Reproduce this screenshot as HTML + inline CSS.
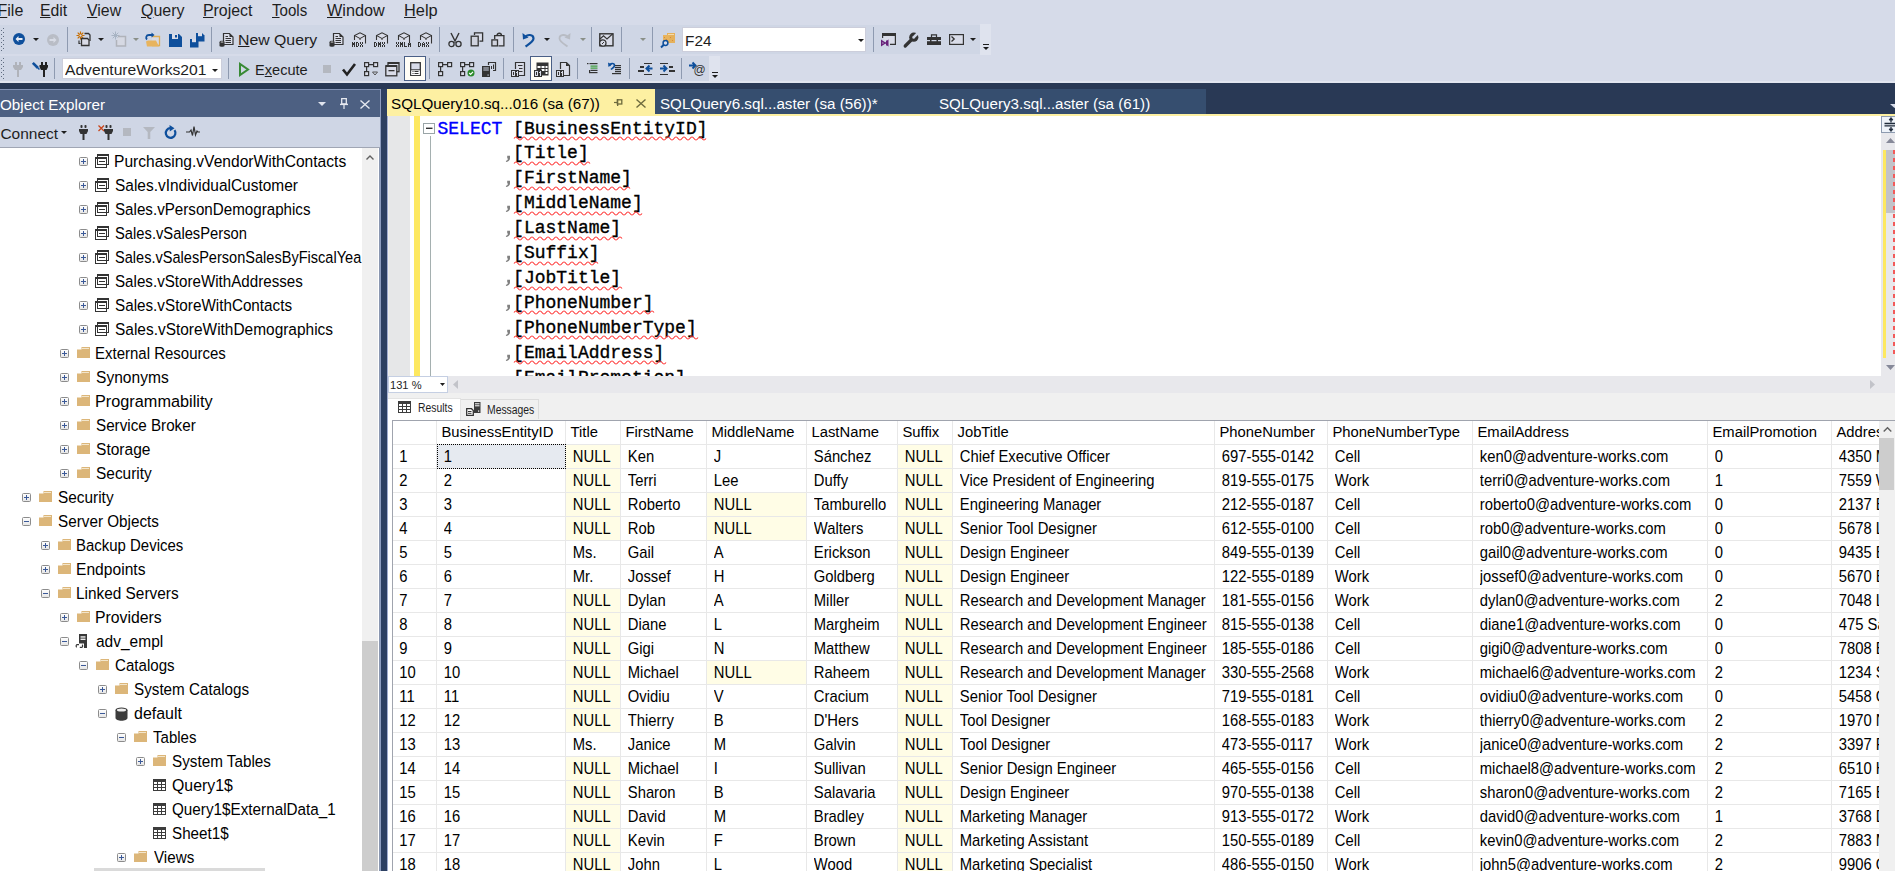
<!DOCTYPE html><html><head><meta charset="utf-8"><style>
html,body{margin:0;padding:0;width:1895px;height:871px;overflow:hidden;background:#d6dbe9;position:relative}
div{box-sizing:border-box}
.t{position:absolute;white-space:pre;font-family:"Liberation Sans",sans-serif;line-height:1;}
.m{position:absolute;white-space:pre;font-family:"Liberation Mono",monospace;line-height:1;}
svg{position:absolute;overflow:visible}
</style></head><body>
<div style="position:absolute;left:0px;top:0px;width:1895px;height:25px;background:#d6dbe9;"></div>
<div class="t" style="left:-2.5px;top:3px;font-size:16px;color:#1e1e1e;"><u>F</u>ile</div>
<div class="t" style="left:39.91px;top:3px;font-size:16px;color:#1e1e1e;transform:scale(0.9885,1.0);transform-origin:0 13px;"><u>E</u>dit</div>
<div class="t" style="left:86.90px;top:3px;font-size:16px;color:#1e1e1e;transform:scale(0.9913,1.0);transform-origin:0 13px;"><u>V</u>iew</div>
<div class="t" style="left:140.60px;top:3px;font-size:16px;color:#1e1e1e;transform:scale(0.9977,1.0);transform-origin:0 13px;"><u>Q</u>uery</div>
<div class="t" style="left:203.11px;top:3px;font-size:16px;color:#1e1e1e;transform:scale(0.9917,1.0);transform-origin:0 13px;"><u>P</u>roject</div>
<div class="t" style="left:271.92px;top:3px;font-size:16px;color:#1e1e1e;transform:scale(0.9423,1.0);transform-origin:0 13px;"><u>T</u>ools</div>
<div class="t" style="left:327.10px;top:3px;font-size:16px;color:#1e1e1e;transform:scale(1.0123,1.0);transform-origin:0 13px;"><u>W</u>indow</div>
<div class="t" style="left:404.07px;top:3px;font-size:16px;color:#1e1e1e;transform:scale(1.0227,1.0);transform-origin:0 13px;"><u>H</u>elp</div>
<div style="position:absolute;left:0px;top:25px;width:980px;height:29px;background:#cfd6e5;"></div>
<div style="position:absolute;left:0px;top:56px;width:709px;height:25px;background:#cfd6e5;"></div>
<div style="position:absolute;left:0px;top:81px;width:1895px;height:2px;background:#e1e5ef;"></div>
<div style="position:absolute;left:0px;top:83px;width:1895px;height:6px;background:#293955;"></div>
<div style="position:absolute;left:0px;top:89px;width:380px;height:1px;background:#8393b5;"></div>
<div style="position:absolute;left:0px;top:90px;width:380px;height:27px;background:#4d6082;"></div>
<div class="t" style="left:-0.50px;top:97px;font-size:15.3px;color:#fff;transform:scale(0.9962,1.0);transform-origin:0 13px;">Object Explorer</div>
<div style="position:absolute;left:0px;top:117px;width:380px;height:30px;background:#cfd6e5;"></div>
<div style="position:absolute;left:0px;top:147px;width:380px;height:1px;background:#a0a6b4;"></div>
<div style="position:absolute;left:0px;top:148px;width:379px;height:723px;background:#ffffff;"></div>
<div class="t" style="left:0.40px;top:125.5px;font-size:15.5px;color:#1e1e1e;transform:scale(1.0000,1.0);transform-origin:0 13px;">Connect</div>
<div style="position:absolute;left:362px;top:148px;width:16px;height:723px;background:#f0f0f0;"></div>
<div style="position:absolute;left:362px;top:641px;width:16px;height:230px;background:#cdcdcd;"></div>
<div style="position:absolute;left:379px;top:148px;width:1px;height:723px;background:#8a97b0;"></div>
<div style="position:absolute;left:0;top:148px;width:362px;height:723px;overflow:hidden">
<svg style="left:79px;top:9.0px" width="9" height="9"><defs><linearGradient id="eg" x1="0" y1="0" x2="0" y2="1"><stop offset="0" stop-color="#fff"/><stop offset="1" stop-color="#e4e4e4"/></linearGradient></defs><rect x="0.5" y="0.5" width="8" height="8" rx="1" fill="url(#eg)" stroke="#8c8c8c"/><rect x="2" y="4" width="5" height="1" fill="#3b5998"/><rect x="4" y="2" width="1" height="5" fill="#3b5998"/></svg>
<svg style="left:95px;top:6.0px" width="14" height="14"><g fill="none" stroke="#333" stroke-width="1"><rect x="2.5" y="0.5" width="11" height="10"/><rect x="0.5" y="3.5" width="11" height="10"/></g><rect x="2" y="0" width="12" height="2" fill="#333"/><rect x="0" y="3" width="12" height="2" fill="#333"/><rect x="4" y="7" width="6" height="1" fill="#333"/></svg>
<div class="t" style="left:114.39px;top:5.5px;font-size:15.5px;color:#000;transform:scale(1.0057,1.1);transform-origin:0 13px;">Purchasing.vVendorWithContacts</div>
<svg style="left:79px;top:33.0px" width="9" height="9"><defs><linearGradient id="eg" x1="0" y1="0" x2="0" y2="1"><stop offset="0" stop-color="#fff"/><stop offset="1" stop-color="#e4e4e4"/></linearGradient></defs><rect x="0.5" y="0.5" width="8" height="8" rx="1" fill="url(#eg)" stroke="#8c8c8c"/><rect x="2" y="4" width="5" height="1" fill="#3b5998"/><rect x="4" y="2" width="1" height="5" fill="#3b5998"/></svg>
<svg style="left:95px;top:30.0px" width="14" height="14"><g fill="none" stroke="#333" stroke-width="1"><rect x="2.5" y="0.5" width="11" height="10"/><rect x="0.5" y="3.5" width="11" height="10"/></g><rect x="2" y="0" width="12" height="2" fill="#333"/><rect x="0" y="3" width="12" height="2" fill="#333"/><rect x="4" y="7" width="6" height="1" fill="#333"/></svg>
<div class="t" style="left:115.00px;top:29.5px;font-size:15.5px;color:#000;transform:scale(0.9967,1.1);transform-origin:0 13px;">Sales.vIndividualCustomer</div>
<svg style="left:79px;top:57.0px" width="9" height="9"><defs><linearGradient id="eg" x1="0" y1="0" x2="0" y2="1"><stop offset="0" stop-color="#fff"/><stop offset="1" stop-color="#e4e4e4"/></linearGradient></defs><rect x="0.5" y="0.5" width="8" height="8" rx="1" fill="url(#eg)" stroke="#8c8c8c"/><rect x="2" y="4" width="5" height="1" fill="#3b5998"/><rect x="4" y="2" width="1" height="5" fill="#3b5998"/></svg>
<svg style="left:95px;top:54.0px" width="14" height="14"><g fill="none" stroke="#333" stroke-width="1"><rect x="2.5" y="0.5" width="11" height="10"/><rect x="0.5" y="3.5" width="11" height="10"/></g><rect x="2" y="0" width="12" height="2" fill="#333"/><rect x="0" y="3" width="12" height="2" fill="#333"/><rect x="4" y="7" width="6" height="1" fill="#333"/></svg>
<div class="t" style="left:115.02px;top:53.5px;font-size:15.5px;color:#000;transform:scale(0.9783,1.1);transform-origin:0 13px;">Sales.vPersonDemographics</div>
<svg style="left:79px;top:81.0px" width="9" height="9"><defs><linearGradient id="eg" x1="0" y1="0" x2="0" y2="1"><stop offset="0" stop-color="#fff"/><stop offset="1" stop-color="#e4e4e4"/></linearGradient></defs><rect x="0.5" y="0.5" width="8" height="8" rx="1" fill="url(#eg)" stroke="#8c8c8c"/><rect x="2" y="4" width="5" height="1" fill="#3b5998"/><rect x="4" y="2" width="1" height="5" fill="#3b5998"/></svg>
<svg style="left:95px;top:78.0px" width="14" height="14"><g fill="none" stroke="#333" stroke-width="1"><rect x="2.5" y="0.5" width="11" height="10"/><rect x="0.5" y="3.5" width="11" height="10"/></g><rect x="2" y="0" width="12" height="2" fill="#333"/><rect x="0" y="3" width="12" height="2" fill="#333"/><rect x="4" y="7" width="6" height="1" fill="#333"/></svg>
<div class="t" style="left:115.03px;top:77.5px;font-size:15.5px;color:#000;transform:scale(0.9511,1.1);transform-origin:0 13px;">Sales.vSalesPerson</div>
<svg style="left:79px;top:105.0px" width="9" height="9"><defs><linearGradient id="eg" x1="0" y1="0" x2="0" y2="1"><stop offset="0" stop-color="#fff"/><stop offset="1" stop-color="#e4e4e4"/></linearGradient></defs><rect x="0.5" y="0.5" width="8" height="8" rx="1" fill="url(#eg)" stroke="#8c8c8c"/><rect x="2" y="4" width="5" height="1" fill="#3b5998"/><rect x="4" y="2" width="1" height="5" fill="#3b5998"/></svg>
<svg style="left:95px;top:102.0px" width="14" height="14"><g fill="none" stroke="#333" stroke-width="1"><rect x="2.5" y="0.5" width="11" height="10"/><rect x="0.5" y="3.5" width="11" height="10"/></g><rect x="2" y="0" width="12" height="2" fill="#333"/><rect x="0" y="3" width="12" height="2" fill="#333"/><rect x="4" y="7" width="6" height="1" fill="#333"/></svg>
<div class="t" style="left:115.04px;top:101.5px;font-size:15.5px;color:#000;transform:scale(0.9392,1.1);transform-origin:0 13px;">Sales.vSalesPersonSalesByFiscalYea</div>
<svg style="left:79px;top:129.0px" width="9" height="9"><defs><linearGradient id="eg" x1="0" y1="0" x2="0" y2="1"><stop offset="0" stop-color="#fff"/><stop offset="1" stop-color="#e4e4e4"/></linearGradient></defs><rect x="0.5" y="0.5" width="8" height="8" rx="1" fill="url(#eg)" stroke="#8c8c8c"/><rect x="2" y="4" width="5" height="1" fill="#3b5998"/><rect x="4" y="2" width="1" height="5" fill="#3b5998"/></svg>
<svg style="left:95px;top:126.0px" width="14" height="14"><g fill="none" stroke="#333" stroke-width="1"><rect x="2.5" y="0.5" width="11" height="10"/><rect x="0.5" y="3.5" width="11" height="10"/></g><rect x="2" y="0" width="12" height="2" fill="#333"/><rect x="0" y="3" width="12" height="2" fill="#333"/><rect x="4" y="7" width="6" height="1" fill="#333"/></svg>
<div class="t" style="left:115.02px;top:125.5px;font-size:15.5px;color:#000;transform:scale(0.9780,1.1);transform-origin:0 13px;">Sales.vStoreWithAddresses</div>
<svg style="left:79px;top:153.0px" width="9" height="9"><defs><linearGradient id="eg" x1="0" y1="0" x2="0" y2="1"><stop offset="0" stop-color="#fff"/><stop offset="1" stop-color="#e4e4e4"/></linearGradient></defs><rect x="0.5" y="0.5" width="8" height="8" rx="1" fill="url(#eg)" stroke="#8c8c8c"/><rect x="2" y="4" width="5" height="1" fill="#3b5998"/><rect x="4" y="2" width="1" height="5" fill="#3b5998"/></svg>
<svg style="left:95px;top:150.0px" width="14" height="14"><g fill="none" stroke="#333" stroke-width="1"><rect x="2.5" y="0.5" width="11" height="10"/><rect x="0.5" y="3.5" width="11" height="10"/></g><rect x="2" y="0" width="12" height="2" fill="#333"/><rect x="0" y="3" width="12" height="2" fill="#333"/><rect x="4" y="7" width="6" height="1" fill="#333"/></svg>
<div class="t" style="left:115.01px;top:149.5px;font-size:15.5px;color:#000;transform:scale(0.9832,1.1);transform-origin:0 13px;">Sales.vStoreWithContacts</div>
<svg style="left:79px;top:177.0px" width="9" height="9"><defs><linearGradient id="eg" x1="0" y1="0" x2="0" y2="1"><stop offset="0" stop-color="#fff"/><stop offset="1" stop-color="#e4e4e4"/></linearGradient></defs><rect x="0.5" y="0.5" width="8" height="8" rx="1" fill="url(#eg)" stroke="#8c8c8c"/><rect x="2" y="4" width="5" height="1" fill="#3b5998"/><rect x="4" y="2" width="1" height="5" fill="#3b5998"/></svg>
<svg style="left:95px;top:174.0px" width="14" height="14"><g fill="none" stroke="#333" stroke-width="1"><rect x="2.5" y="0.5" width="11" height="10"/><rect x="0.5" y="3.5" width="11" height="10"/></g><rect x="2" y="0" width="12" height="2" fill="#333"/><rect x="0" y="3" width="12" height="2" fill="#333"/><rect x="4" y="7" width="6" height="1" fill="#333"/></svg>
<div class="t" style="left:115.00px;top:173.5px;font-size:15.5px;color:#000;transform:scale(0.9963,1.1);transform-origin:0 13px;">Sales.vStoreWithDemographics</div>
<svg style="left:60px;top:201.0px" width="9" height="9"><defs><linearGradient id="eg" x1="0" y1="0" x2="0" y2="1"><stop offset="0" stop-color="#fff"/><stop offset="1" stop-color="#e4e4e4"/></linearGradient></defs><rect x="0.5" y="0.5" width="8" height="8" rx="1" fill="url(#eg)" stroke="#8c8c8c"/><rect x="2" y="4" width="5" height="1" fill="#3b5998"/><rect x="4" y="2" width="1" height="5" fill="#3b5998"/></svg>
<svg style="left:77px;top:199.0px" width="13" height="12"><path d="M0 2.5H4.5V0H13V11H0Z" fill="#dcb679"/><rect x="5" y="1" width="7" height="1" fill="#f3e6cc"/></svg>
<div class="t" style="left:95.44px;top:197.5px;font-size:15.5px;color:#000;transform:scale(0.9670,1.1);transform-origin:0 13px;">External Resources</div>
<svg style="left:60px;top:225.0px" width="9" height="9"><defs><linearGradient id="eg" x1="0" y1="0" x2="0" y2="1"><stop offset="0" stop-color="#fff"/><stop offset="1" stop-color="#e4e4e4"/></linearGradient></defs><rect x="0.5" y="0.5" width="8" height="8" rx="1" fill="url(#eg)" stroke="#8c8c8c"/><rect x="2" y="4" width="5" height="1" fill="#3b5998"/><rect x="4" y="2" width="1" height="5" fill="#3b5998"/></svg>
<svg style="left:77px;top:223.0px" width="13" height="12"><path d="M0 2.5H4.5V0H13V11H0Z" fill="#dcb679"/><rect x="5" y="1" width="7" height="1" fill="#f3e6cc"/></svg>
<div class="t" style="left:96.00px;top:221.5px;font-size:15.5px;color:#000;transform:scale(1.0042,1.1);transform-origin:0 13px;">Synonyms</div>
<svg style="left:60px;top:249.0px" width="9" height="9"><defs><linearGradient id="eg" x1="0" y1="0" x2="0" y2="1"><stop offset="0" stop-color="#fff"/><stop offset="1" stop-color="#e4e4e4"/></linearGradient></defs><rect x="0.5" y="0.5" width="8" height="8" rx="1" fill="url(#eg)" stroke="#8c8c8c"/><rect x="2" y="4" width="5" height="1" fill="#3b5998"/><rect x="4" y="2" width="1" height="5" fill="#3b5998"/></svg>
<svg style="left:77px;top:247.0px" width="13" height="12"><path d="M0 2.5H4.5V0H13V11H0Z" fill="#dcb679"/><rect x="5" y="1" width="7" height="1" fill="#f3e6cc"/></svg>
<div class="t" style="left:95.34px;top:245.5px;font-size:15.5px;color:#000;transform:scale(1.0497,1.1);transform-origin:0 13px;">Programmability</div>
<svg style="left:60px;top:273.0px" width="9" height="9"><defs><linearGradient id="eg" x1="0" y1="0" x2="0" y2="1"><stop offset="0" stop-color="#fff"/><stop offset="1" stop-color="#e4e4e4"/></linearGradient></defs><rect x="0.5" y="0.5" width="8" height="8" rx="1" fill="url(#eg)" stroke="#8c8c8c"/><rect x="2" y="4" width="5" height="1" fill="#3b5998"/><rect x="4" y="2" width="1" height="5" fill="#3b5998"/></svg>
<svg style="left:77px;top:271.0px" width="13" height="12"><path d="M0 2.5H4.5V0H13V11H0Z" fill="#dcb679"/><rect x="5" y="1" width="7" height="1" fill="#f3e6cc"/></svg>
<div class="t" style="left:96.01px;top:269.5px;font-size:15.5px;color:#000;transform:scale(0.9811,1.1);transform-origin:0 13px;">Service Broker</div>
<svg style="left:60px;top:297.0px" width="9" height="9"><defs><linearGradient id="eg" x1="0" y1="0" x2="0" y2="1"><stop offset="0" stop-color="#fff"/><stop offset="1" stop-color="#e4e4e4"/></linearGradient></defs><rect x="0.5" y="0.5" width="8" height="8" rx="1" fill="url(#eg)" stroke="#8c8c8c"/><rect x="2" y="4" width="5" height="1" fill="#3b5998"/><rect x="4" y="2" width="1" height="5" fill="#3b5998"/></svg>
<svg style="left:77px;top:295.0px" width="13" height="12"><path d="M0 2.5H4.5V0H13V11H0Z" fill="#dcb679"/><rect x="5" y="1" width="7" height="1" fill="#f3e6cc"/></svg>
<div class="t" style="left:96.00px;top:293.5px;font-size:15.5px;color:#000;transform:scale(1.0038,1.1);transform-origin:0 13px;">Storage</div>
<svg style="left:60px;top:321.0px" width="9" height="9"><defs><linearGradient id="eg" x1="0" y1="0" x2="0" y2="1"><stop offset="0" stop-color="#fff"/><stop offset="1" stop-color="#e4e4e4"/></linearGradient></defs><rect x="0.5" y="0.5" width="8" height="8" rx="1" fill="url(#eg)" stroke="#8c8c8c"/><rect x="2" y="4" width="5" height="1" fill="#3b5998"/><rect x="4" y="2" width="1" height="5" fill="#3b5998"/></svg>
<svg style="left:77px;top:319.0px" width="13" height="12"><path d="M0 2.5H4.5V0H13V11H0Z" fill="#dcb679"/><rect x="5" y="1" width="7" height="1" fill="#f3e6cc"/></svg>
<div class="t" style="left:96.00px;top:317.5px;font-size:15.5px;color:#000;transform:scale(0.9964,1.1);transform-origin:0 13px;">Security</div>
<svg style="left:22px;top:345.0px" width="9" height="9"><defs><linearGradient id="eg" x1="0" y1="0" x2="0" y2="1"><stop offset="0" stop-color="#fff"/><stop offset="1" stop-color="#e4e4e4"/></linearGradient></defs><rect x="0.5" y="0.5" width="8" height="8" rx="1" fill="url(#eg)" stroke="#8c8c8c"/><rect x="2" y="4" width="5" height="1" fill="#3b5998"/><rect x="4" y="2" width="1" height="5" fill="#3b5998"/></svg>
<svg style="left:39px;top:343.0px" width="13" height="12"><path d="M0 2.5H4.5V0H13V11H0Z" fill="#dcb679"/><rect x="5" y="1" width="7" height="1" fill="#f3e6cc"/></svg>
<div class="t" style="left:58.01px;top:341.5px;font-size:15.5px;color:#000;transform:scale(0.9928,1.1);transform-origin:0 13px;">Security</div>
<svg style="left:22px;top:369.0px" width="9" height="9"><defs><linearGradient id="eg" x1="0" y1="0" x2="0" y2="1"><stop offset="0" stop-color="#fff"/><stop offset="1" stop-color="#e4e4e4"/></linearGradient></defs><rect x="0.5" y="0.5" width="8" height="8" rx="1" fill="url(#eg)" stroke="#8c8c8c"/><rect x="2" y="4" width="5" height="1" fill="#3b5998"/></svg>
<svg style="left:39px;top:367.0px" width="13" height="12"><path d="M0 2.5H4.5V0H13V11H0Z" fill="#dcb679"/><rect x="5" y="1" width="7" height="1" fill="#f3e6cc"/></svg>
<div class="t" style="left:58.01px;top:365.5px;font-size:15.5px;color:#000;transform:scale(0.9852,1.1);transform-origin:0 13px;">Server Objects</div>
<svg style="left:41px;top:393.0px" width="9" height="9"><defs><linearGradient id="eg" x1="0" y1="0" x2="0" y2="1"><stop offset="0" stop-color="#fff"/><stop offset="1" stop-color="#e4e4e4"/></linearGradient></defs><rect x="0.5" y="0.5" width="8" height="8" rx="1" fill="url(#eg)" stroke="#8c8c8c"/><rect x="2" y="4" width="5" height="1" fill="#3b5998"/><rect x="4" y="2" width="1" height="5" fill="#3b5998"/></svg>
<svg style="left:58px;top:391.0px" width="13" height="12"><path d="M0 2.5H4.5V0H13V11H0Z" fill="#dcb679"/><rect x="5" y="1" width="7" height="1" fill="#f3e6cc"/></svg>
<div class="t" style="left:76.45px;top:389.5px;font-size:15.5px;color:#000;transform:scale(0.9652,1.1);transform-origin:0 13px;">Backup Devices</div>
<svg style="left:41px;top:417.0px" width="9" height="9"><defs><linearGradient id="eg" x1="0" y1="0" x2="0" y2="1"><stop offset="0" stop-color="#fff"/><stop offset="1" stop-color="#e4e4e4"/></linearGradient></defs><rect x="0.5" y="0.5" width="8" height="8" rx="1" fill="url(#eg)" stroke="#8c8c8c"/><rect x="2" y="4" width="5" height="1" fill="#3b5998"/><rect x="4" y="2" width="1" height="5" fill="#3b5998"/></svg>
<svg style="left:58px;top:415.0px" width="13" height="12"><path d="M0 2.5H4.5V0H13V11H0Z" fill="#dcb679"/><rect x="5" y="1" width="7" height="1" fill="#f3e6cc"/></svg>
<div class="t" style="left:76.39px;top:413.5px;font-size:15.5px;color:#000;transform:scale(1.0075,1.1);transform-origin:0 13px;">Endpoints</div>
<svg style="left:41px;top:441.0px" width="9" height="9"><defs><linearGradient id="eg" x1="0" y1="0" x2="0" y2="1"><stop offset="0" stop-color="#fff"/><stop offset="1" stop-color="#e4e4e4"/></linearGradient></defs><rect x="0.5" y="0.5" width="8" height="8" rx="1" fill="url(#eg)" stroke="#8c8c8c"/><rect x="2" y="4" width="5" height="1" fill="#3b5998"/></svg>
<svg style="left:58px;top:439.0px" width="13" height="12"><path d="M0 2.5H4.5V0H13V11H0Z" fill="#dcb679"/><rect x="5" y="1" width="7" height="1" fill="#f3e6cc"/></svg>
<div class="t" style="left:76.41px;top:437.5px;font-size:15.5px;color:#000;transform:scale(0.9921,1.1);transform-origin:0 13px;">Linked Servers</div>
<svg style="left:60px;top:465.0px" width="9" height="9"><defs><linearGradient id="eg" x1="0" y1="0" x2="0" y2="1"><stop offset="0" stop-color="#fff"/><stop offset="1" stop-color="#e4e4e4"/></linearGradient></defs><rect x="0.5" y="0.5" width="8" height="8" rx="1" fill="url(#eg)" stroke="#8c8c8c"/><rect x="2" y="4" width="5" height="1" fill="#3b5998"/><rect x="4" y="2" width="1" height="5" fill="#3b5998"/></svg>
<svg style="left:77px;top:463.0px" width="13" height="12"><path d="M0 2.5H4.5V0H13V11H0Z" fill="#dcb679"/><rect x="5" y="1" width="7" height="1" fill="#f3e6cc"/></svg>
<div class="t" style="left:95.38px;top:461.5px;font-size:15.5px;color:#000;transform:scale(1.0189,1.1);transform-origin:0 13px;">Providers</div>
<svg style="left:60px;top:489.0px" width="9" height="9"><defs><linearGradient id="eg" x1="0" y1="0" x2="0" y2="1"><stop offset="0" stop-color="#fff"/><stop offset="1" stop-color="#e4e4e4"/></linearGradient></defs><rect x="0.5" y="0.5" width="8" height="8" rx="1" fill="url(#eg)" stroke="#8c8c8c"/><rect x="2" y="4" width="5" height="1" fill="#3b5998"/></svg>
<svg style="left:75px;top:486.0px" width="13" height="15"><rect x="4" y="0" width="8" height="14" fill="#383838"/><rect x="5.5" y="2.3" width="5" height="1.3" fill="#fff"/><rect x="5.5" y="4.6" width="5" height="1.3" fill="#fff"/><rect x="0" y="9.5" width="9" height="5.5" fill="#fff"/><path d="M1.8 13.2a1.5 1.5 0 0 1 0-2.5h2.2M7 10.8a1.5 1.5 0 0 1 0 2.5H4.8" fill="none" stroke="#383838" stroke-width="1.2"/></svg>
<div class="t" style="left:96.00px;top:485.5px;font-size:15.5px;color:#000;transform:scale(1.0000,1.1);transform-origin:0 13px;">adv_empl</div>
<svg style="left:79px;top:513.0px" width="9" height="9"><defs><linearGradient id="eg" x1="0" y1="0" x2="0" y2="1"><stop offset="0" stop-color="#fff"/><stop offset="1" stop-color="#e4e4e4"/></linearGradient></defs><rect x="0.5" y="0.5" width="8" height="8" rx="1" fill="url(#eg)" stroke="#8c8c8c"/><rect x="2" y="4" width="5" height="1" fill="#3b5998"/></svg>
<svg style="left:96px;top:511.0px" width="13" height="12"><path d="M0 2.5H4.5V0H13V11H0Z" fill="#dcb679"/><rect x="5" y="1" width="7" height="1" fill="#f3e6cc"/></svg>
<div class="t" style="left:114.92px;top:509.5px;font-size:15.5px;color:#000;transform:scale(0.9749,1.1);transform-origin:0 13px;">Catalogs</div>
<svg style="left:98px;top:537.0px" width="9" height="9"><defs><linearGradient id="eg" x1="0" y1="0" x2="0" y2="1"><stop offset="0" stop-color="#fff"/><stop offset="1" stop-color="#e4e4e4"/></linearGradient></defs><rect x="0.5" y="0.5" width="8" height="8" rx="1" fill="url(#eg)" stroke="#8c8c8c"/><rect x="2" y="4" width="5" height="1" fill="#3b5998"/><rect x="4" y="2" width="1" height="5" fill="#3b5998"/></svg>
<svg style="left:115px;top:535.0px" width="13" height="12"><path d="M0 2.5H4.5V0H13V11H0Z" fill="#dcb679"/><rect x="5" y="1" width="7" height="1" fill="#f3e6cc"/></svg>
<div class="t" style="left:134.01px;top:533.5px;font-size:15.5px;color:#000;transform:scale(0.9827,1.1);transform-origin:0 13px;">System Catalogs</div>
<svg style="left:98px;top:561.0px" width="9" height="9"><defs><linearGradient id="eg" x1="0" y1="0" x2="0" y2="1"><stop offset="0" stop-color="#fff"/><stop offset="1" stop-color="#e4e4e4"/></linearGradient></defs><rect x="0.5" y="0.5" width="8" height="8" rx="1" fill="url(#eg)" stroke="#8c8c8c"/><rect x="2" y="4" width="5" height="1" fill="#3b5998"/></svg>
<svg style="left:115px;top:559.0px" width="13" height="14"><path d="M0.5 3V11C0.5 12.6 3.3 13.8 6.5 13.8S12.5 12.6 12.5 11V3Z" fill="#3c3c3c"/><ellipse cx="6.5" cy="3" rx="6" ry="2.6" fill="#3c3c3c"/><ellipse cx="6.5" cy="3" rx="4.6" ry="1.5" fill="#eee"/></svg>
<div class="t" style="left:133.98px;top:557.5px;font-size:15.5px;color:#000;transform:scale(1.0306,1.1);transform-origin:0 13px;">default</div>
<svg style="left:117px;top:585.0px" width="9" height="9"><defs><linearGradient id="eg" x1="0" y1="0" x2="0" y2="1"><stop offset="0" stop-color="#fff"/><stop offset="1" stop-color="#e4e4e4"/></linearGradient></defs><rect x="0.5" y="0.5" width="8" height="8" rx="1" fill="url(#eg)" stroke="#8c8c8c"/><rect x="2" y="4" width="5" height="1" fill="#3b5998"/></svg>
<svg style="left:134px;top:583.0px" width="13" height="12"><path d="M0 2.5H4.5V0H13V11H0Z" fill="#dcb679"/><rect x="5" y="1" width="7" height="1" fill="#f3e6cc"/></svg>
<div class="t" style="left:153.41px;top:581.5px;font-size:15.5px;color:#000;transform:scale(0.9705,1.1);transform-origin:0 13px;">Tables</div>
<svg style="left:136px;top:609.0px" width="9" height="9"><defs><linearGradient id="eg" x1="0" y1="0" x2="0" y2="1"><stop offset="0" stop-color="#fff"/><stop offset="1" stop-color="#e4e4e4"/></linearGradient></defs><rect x="0.5" y="0.5" width="8" height="8" rx="1" fill="url(#eg)" stroke="#8c8c8c"/><rect x="2" y="4" width="5" height="1" fill="#3b5998"/><rect x="4" y="2" width="1" height="5" fill="#3b5998"/></svg>
<svg style="left:153px;top:607.0px" width="13" height="12"><path d="M0 2.5H4.5V0H13V11H0Z" fill="#dcb679"/><rect x="5" y="1" width="7" height="1" fill="#f3e6cc"/></svg>
<div class="t" style="left:172.01px;top:605.5px;font-size:15.5px;color:#000;transform:scale(0.9839,1.1);transform-origin:0 13px;">System Tables</div>
<svg style="left:153px;top:631.0px" width="13" height="12"><rect x="0" y="0" width="13" height="12" fill="#3c3c3c"/><g fill="#fff"><rect x="1" y="3" width="3" height="2"/><rect x="5" y="3" width="3" height="2"/><rect x="9" y="3" width="3" height="2"/><rect x="1" y="6" width="3" height="2"/><rect x="5" y="6" width="3" height="2"/><rect x="9" y="6" width="3" height="2"/><rect x="1" y="9" width="3" height="2"/><rect x="5" y="9" width="3" height="2"/><rect x="9" y="9" width="3" height="2"/></g></svg>
<div class="t" style="left:171.98px;top:629.5px;font-size:15.5px;color:#000;transform:scale(1.0222,1.1);transform-origin:0 13px;">Query1$</div>
<svg style="left:153px;top:655.0px" width="13" height="12"><rect x="0" y="0" width="13" height="12" fill="#3c3c3c"/><g fill="#fff"><rect x="1" y="3" width="3" height="2"/><rect x="5" y="3" width="3" height="2"/><rect x="9" y="3" width="3" height="2"/><rect x="1" y="6" width="3" height="2"/><rect x="5" y="6" width="3" height="2"/><rect x="9" y="6" width="3" height="2"/><rect x="1" y="9" width="3" height="2"/><rect x="5" y="9" width="3" height="2"/><rect x="9" y="9" width="3" height="2"/></g></svg>
<div class="t" style="left:172.01px;top:653.5px;font-size:15.5px;color:#000;transform:scale(0.9848,1.1);transform-origin:0 13px;">Query1$ExternalData_1</div>
<svg style="left:153px;top:679.0px" width="13" height="12"><rect x="0" y="0" width="13" height="12" fill="#3c3c3c"/><g fill="#fff"><rect x="1" y="3" width="3" height="2"/><rect x="5" y="3" width="3" height="2"/><rect x="9" y="3" width="3" height="2"/><rect x="1" y="6" width="3" height="2"/><rect x="5" y="6" width="3" height="2"/><rect x="9" y="6" width="3" height="2"/><rect x="1" y="9" width="3" height="2"/><rect x="5" y="9" width="3" height="2"/><rect x="9" y="9" width="3" height="2"/></g></svg>
<div class="t" style="left:172.01px;top:677.5px;font-size:15.5px;color:#000;transform:scale(0.9806,1.1);transform-origin:0 13px;">Sheet1$</div>
<svg style="left:117px;top:705.0px" width="9" height="9"><defs><linearGradient id="eg" x1="0" y1="0" x2="0" y2="1"><stop offset="0" stop-color="#fff"/><stop offset="1" stop-color="#e4e4e4"/></linearGradient></defs><rect x="0.5" y="0.5" width="8" height="8" rx="1" fill="url(#eg)" stroke="#8c8c8c"/><rect x="2" y="4" width="5" height="1" fill="#3b5998"/><rect x="4" y="2" width="1" height="5" fill="#3b5998"/></svg>
<svg style="left:134px;top:703.0px" width="13" height="12"><path d="M0 2.5H4.5V0H13V11H0Z" fill="#dcb679"/><rect x="5" y="1" width="7" height="1" fill="#f3e6cc"/></svg>
<div class="t" style="left:153.60px;top:701.5px;font-size:15.5px;color:#000;transform:scale(0.9802,1.1);transform-origin:0 13px;">Views</div>
</div>
<div style="position:absolute;left:380px;top:89px;width:8px;height:782px;background:#2d4062;"></div>
<div style="position:absolute;left:380px;top:89px;width:1px;height:782px;background:#8e9dbf;"></div>
<div style="position:absolute;left:387px;top:116px;width:1px;height:755px;background:#a0acd0;"></div>
<div style="position:absolute;left:388px;top:83px;width:1507px;height:33px;background:#293955;"></div>
<div style="position:absolute;left:387px;top:89px;width:268px;height:25px;background:#fdf0a2;"></div>
<div style="position:absolute;left:655px;top:89px;width:551px;height:25px;background:#364e6f;"></div>
<div style="position:absolute;left:387px;top:114px;width:1508px;height:2px;background:#fdf0a2;"></div>
<div class="t" style="left:390.91px;top:95.5px;font-size:15.5px;color:#000;transform:scale(0.9815,1.0);transform-origin:0 13px;">SQLQuery10.sq...016 (sa (67))</div>
<div class="t" style="left:660.01px;top:95.5px;font-size:15.5px;color:#fff;transform:scale(0.9792,1.0);transform-origin:0 13px;">SQLQuery6.sql...aster (sa (56))*</div>
<div class="t" style="left:939.02px;top:95.5px;font-size:15.5px;color:#fff;transform:scale(0.9767,1.0);transform-origin:0 13px;">SQLQuery3.sql...aster (sa (61))</div>
<div style="position:absolute;left:388px;top:116px;width:1493px;height:260px;background:#ffffff;"></div>
<div style="position:absolute;left:388px;top:116px;width:1px;height:260px;background:#ececec;"></div>
<div style="position:absolute;left:389px;top:116px;width:21px;height:260px;background:#e6e7e8;"></div>
<div style="position:absolute;left:414px;top:116px;width:6px;height:260px;background:#fde860;"></div>
<div style="position:absolute;left:430px;top:136px;width:1px;height:240px;background:#a5b0b0;"></div>
<div style="position:absolute;left:388px;top:116px;width:1493px;height:260px;overflow:hidden">
<div class="m" style="left:49.5px;top:3.50px;font-size:18.0px;color:#0000ff;-webkit-text-stroke:0.35px #0000ff">SELECT</div>
<div class="m" style="left:125.10px;top:3.50px;font-size:18.0px;color:#000;-webkit-text-stroke:0.35px #000">[BusinessEntityID]</div>
<svg style="left:126px;top:20.10px" width="197" height="6"><path d="M0 2.5 Q2 -0.5 4 2.5 Q6 5.5 8 2.5 Q10 -0.5 12 2.5 Q14 5.5 16 2.5 Q18 -0.5 20 2.5 Q22 5.5 24 2.5 Q26 -0.5 28 2.5 Q30 5.5 32 2.5 Q34 -0.5 36 2.5 Q38 5.5 40 2.5 Q42 -0.5 44 2.5 Q46 5.5 48 2.5 Q50 -0.5 52 2.5 Q54 5.5 56 2.5 Q58 -0.5 60 2.5 Q62 5.5 64 2.5 Q66 -0.5 68 2.5 Q70 5.5 72 2.5 Q74 -0.5 76 2.5 Q78 5.5 80 2.5 Q82 -0.5 84 2.5 Q86 5.5 88 2.5 Q90 -0.5 92 2.5 Q94 5.5 96 2.5 Q98 -0.5 100 2.5 Q102 5.5 104 2.5 Q106 -0.5 108 2.5 Q110 5.5 112 2.5 Q114 -0.5 116 2.5 Q118 5.5 120 2.5 Q122 -0.5 124 2.5 Q126 5.5 128 2.5 Q130 -0.5 132 2.5 Q134 5.5 136 2.5 Q138 -0.5 140 2.5 Q142 5.5 144 2.5 Q146 -0.5 148 2.5 Q150 5.5 152 2.5 Q154 -0.5 156 2.5 Q158 5.5 160 2.5 Q162 -0.5 164 2.5 Q166 5.5 168 2.5 Q170 -0.5 172 2.5 Q174 5.5 176 2.5 Q178 -0.5 180 2.5 Q182 5.5 184 2.5 Q186 -0.5 188 2.5 Q190 5.5 192 2.5" fill="none" stroke="#ff3c3c" stroke-width="1.15"/></svg>
<svg style="left:116.90px;top:38.90px" width="6" height="8"><path d="M2.2 0.8H5V3.2C5 5 4 6.3 1.2 7L0.8 5.9C2.3 5.4 2.9 4.7 3 3.6H2.2Z" fill="#808080"/></svg>
<div class="m" style="left:125.10px;top:28.40px;font-size:18.0px;color:#000;-webkit-text-stroke:0.35px #000">[Title]</div>
<svg style="left:126px;top:45.00px" width="79" height="6"><path d="M0 2.5 Q2 -0.5 4 2.5 Q6 5.5 8 2.5 Q10 -0.5 12 2.5 Q14 5.5 16 2.5 Q18 -0.5 20 2.5 Q22 5.5 24 2.5 Q26 -0.5 28 2.5 Q30 5.5 32 2.5 Q34 -0.5 36 2.5 Q38 5.5 40 2.5 Q42 -0.5 44 2.5 Q46 5.5 48 2.5 Q50 -0.5 52 2.5 Q54 5.5 56 2.5 Q58 -0.5 60 2.5 Q62 5.5 64 2.5 Q66 -0.5 68 2.5 Q70 5.5 72 2.5 Q74 -0.5 76 2.5" fill="none" stroke="#ff3c3c" stroke-width="1.15"/></svg>
<svg style="left:116.90px;top:63.80px" width="6" height="8"><path d="M2.2 0.8H5V3.2C5 5 4 6.3 1.2 7L0.8 5.9C2.3 5.4 2.9 4.7 3 3.6H2.2Z" fill="#808080"/></svg>
<div class="m" style="left:125.10px;top:53.30px;font-size:18.0px;color:#000;-webkit-text-stroke:0.35px #000">[FirstName]</div>
<svg style="left:126px;top:69.90px" width="122" height="6"><path d="M0 2.5 Q2 -0.5 4 2.5 Q6 5.5 8 2.5 Q10 -0.5 12 2.5 Q14 5.5 16 2.5 Q18 -0.5 20 2.5 Q22 5.5 24 2.5 Q26 -0.5 28 2.5 Q30 5.5 32 2.5 Q34 -0.5 36 2.5 Q38 5.5 40 2.5 Q42 -0.5 44 2.5 Q46 5.5 48 2.5 Q50 -0.5 52 2.5 Q54 5.5 56 2.5 Q58 -0.5 60 2.5 Q62 5.5 64 2.5 Q66 -0.5 68 2.5 Q70 5.5 72 2.5 Q74 -0.5 76 2.5 Q78 5.5 80 2.5 Q82 -0.5 84 2.5 Q86 5.5 88 2.5 Q90 -0.5 92 2.5 Q94 5.5 96 2.5 Q98 -0.5 100 2.5 Q102 5.5 104 2.5 Q106 -0.5 108 2.5 Q110 5.5 112 2.5 Q114 -0.5 116 2.5" fill="none" stroke="#ff3c3c" stroke-width="1.15"/></svg>
<svg style="left:116.90px;top:88.70px" width="6" height="8"><path d="M2.2 0.8H5V3.2C5 5 4 6.3 1.2 7L0.8 5.9C2.3 5.4 2.9 4.7 3 3.6H2.2Z" fill="#808080"/></svg>
<div class="m" style="left:125.10px;top:78.20px;font-size:18.0px;color:#000;-webkit-text-stroke:0.35px #000">[MiddleName]</div>
<svg style="left:126px;top:94.80px" width="133" height="6"><path d="M0 2.5 Q2 -0.5 4 2.5 Q6 5.5 8 2.5 Q10 -0.5 12 2.5 Q14 5.5 16 2.5 Q18 -0.5 20 2.5 Q22 5.5 24 2.5 Q26 -0.5 28 2.5 Q30 5.5 32 2.5 Q34 -0.5 36 2.5 Q38 5.5 40 2.5 Q42 -0.5 44 2.5 Q46 5.5 48 2.5 Q50 -0.5 52 2.5 Q54 5.5 56 2.5 Q58 -0.5 60 2.5 Q62 5.5 64 2.5 Q66 -0.5 68 2.5 Q70 5.5 72 2.5 Q74 -0.5 76 2.5 Q78 5.5 80 2.5 Q82 -0.5 84 2.5 Q86 5.5 88 2.5 Q90 -0.5 92 2.5 Q94 5.5 96 2.5 Q98 -0.5 100 2.5 Q102 5.5 104 2.5 Q106 -0.5 108 2.5 Q110 5.5 112 2.5 Q114 -0.5 116 2.5 Q118 5.5 120 2.5 Q122 -0.5 124 2.5 Q126 5.5 128 2.5" fill="none" stroke="#ff3c3c" stroke-width="1.15"/></svg>
<svg style="left:116.90px;top:113.60px" width="6" height="8"><path d="M2.2 0.8H5V3.2C5 5 4 6.3 1.2 7L0.8 5.9C2.3 5.4 2.9 4.7 3 3.6H2.2Z" fill="#808080"/></svg>
<div class="m" style="left:125.10px;top:103.10px;font-size:18.0px;color:#000;-webkit-text-stroke:0.35px #000">[LastName]</div>
<svg style="left:126px;top:119.70px" width="111" height="6"><path d="M0 2.5 Q2 -0.5 4 2.5 Q6 5.5 8 2.5 Q10 -0.5 12 2.5 Q14 5.5 16 2.5 Q18 -0.5 20 2.5 Q22 5.5 24 2.5 Q26 -0.5 28 2.5 Q30 5.5 32 2.5 Q34 -0.5 36 2.5 Q38 5.5 40 2.5 Q42 -0.5 44 2.5 Q46 5.5 48 2.5 Q50 -0.5 52 2.5 Q54 5.5 56 2.5 Q58 -0.5 60 2.5 Q62 5.5 64 2.5 Q66 -0.5 68 2.5 Q70 5.5 72 2.5 Q74 -0.5 76 2.5 Q78 5.5 80 2.5 Q82 -0.5 84 2.5 Q86 5.5 88 2.5 Q90 -0.5 92 2.5 Q94 5.5 96 2.5 Q98 -0.5 100 2.5 Q102 5.5 104 2.5 Q106 -0.5 108 2.5" fill="none" stroke="#ff3c3c" stroke-width="1.15"/></svg>
<svg style="left:116.90px;top:138.50px" width="6" height="8"><path d="M2.2 0.8H5V3.2C5 5 4 6.3 1.2 7L0.8 5.9C2.3 5.4 2.9 4.7 3 3.6H2.2Z" fill="#808080"/></svg>
<div class="m" style="left:125.10px;top:128.00px;font-size:18.0px;color:#000;-webkit-text-stroke:0.35px #000">[Suffix]</div>
<svg style="left:126px;top:144.60px" width="89" height="6"><path d="M0 2.5 Q2 -0.5 4 2.5 Q6 5.5 8 2.5 Q10 -0.5 12 2.5 Q14 5.5 16 2.5 Q18 -0.5 20 2.5 Q22 5.5 24 2.5 Q26 -0.5 28 2.5 Q30 5.5 32 2.5 Q34 -0.5 36 2.5 Q38 5.5 40 2.5 Q42 -0.5 44 2.5 Q46 5.5 48 2.5 Q50 -0.5 52 2.5 Q54 5.5 56 2.5 Q58 -0.5 60 2.5 Q62 5.5 64 2.5 Q66 -0.5 68 2.5 Q70 5.5 72 2.5 Q74 -0.5 76 2.5 Q78 5.5 80 2.5 Q82 -0.5 84 2.5" fill="none" stroke="#ff3c3c" stroke-width="1.15"/></svg>
<svg style="left:116.90px;top:163.40px" width="6" height="8"><path d="M2.2 0.8H5V3.2C5 5 4 6.3 1.2 7L0.8 5.9C2.3 5.4 2.9 4.7 3 3.6H2.2Z" fill="#808080"/></svg>
<div class="m" style="left:125.10px;top:152.90px;font-size:18.0px;color:#000;-webkit-text-stroke:0.35px #000">[JobTitle]</div>
<svg style="left:126px;top:169.50px" width="111" height="6"><path d="M0 2.5 Q2 -0.5 4 2.5 Q6 5.5 8 2.5 Q10 -0.5 12 2.5 Q14 5.5 16 2.5 Q18 -0.5 20 2.5 Q22 5.5 24 2.5 Q26 -0.5 28 2.5 Q30 5.5 32 2.5 Q34 -0.5 36 2.5 Q38 5.5 40 2.5 Q42 -0.5 44 2.5 Q46 5.5 48 2.5 Q50 -0.5 52 2.5 Q54 5.5 56 2.5 Q58 -0.5 60 2.5 Q62 5.5 64 2.5 Q66 -0.5 68 2.5 Q70 5.5 72 2.5 Q74 -0.5 76 2.5 Q78 5.5 80 2.5 Q82 -0.5 84 2.5 Q86 5.5 88 2.5 Q90 -0.5 92 2.5 Q94 5.5 96 2.5 Q98 -0.5 100 2.5 Q102 5.5 104 2.5 Q106 -0.5 108 2.5" fill="none" stroke="#ff3c3c" stroke-width="1.15"/></svg>
<svg style="left:116.90px;top:188.30px" width="6" height="8"><path d="M2.2 0.8H5V3.2C5 5 4 6.3 1.2 7L0.8 5.9C2.3 5.4 2.9 4.7 3 3.6H2.2Z" fill="#808080"/></svg>
<div class="m" style="left:125.10px;top:177.80px;font-size:18.0px;color:#000;-webkit-text-stroke:0.35px #000">[PhoneNumber]</div>
<svg style="left:126px;top:194.40px" width="143" height="6"><path d="M0 2.5 Q2 -0.5 4 2.5 Q6 5.5 8 2.5 Q10 -0.5 12 2.5 Q14 5.5 16 2.5 Q18 -0.5 20 2.5 Q22 5.5 24 2.5 Q26 -0.5 28 2.5 Q30 5.5 32 2.5 Q34 -0.5 36 2.5 Q38 5.5 40 2.5 Q42 -0.5 44 2.5 Q46 5.5 48 2.5 Q50 -0.5 52 2.5 Q54 5.5 56 2.5 Q58 -0.5 60 2.5 Q62 5.5 64 2.5 Q66 -0.5 68 2.5 Q70 5.5 72 2.5 Q74 -0.5 76 2.5 Q78 5.5 80 2.5 Q82 -0.5 84 2.5 Q86 5.5 88 2.5 Q90 -0.5 92 2.5 Q94 5.5 96 2.5 Q98 -0.5 100 2.5 Q102 5.5 104 2.5 Q106 -0.5 108 2.5 Q110 5.5 112 2.5 Q114 -0.5 116 2.5 Q118 5.5 120 2.5 Q122 -0.5 124 2.5 Q126 5.5 128 2.5 Q130 -0.5 132 2.5 Q134 5.5 136 2.5 Q138 -0.5 140 2.5" fill="none" stroke="#ff3c3c" stroke-width="1.15"/></svg>
<svg style="left:116.90px;top:213.20px" width="6" height="8"><path d="M2.2 0.8H5V3.2C5 5 4 6.3 1.2 7L0.8 5.9C2.3 5.4 2.9 4.7 3 3.6H2.2Z" fill="#808080"/></svg>
<div class="m" style="left:125.10px;top:202.70px;font-size:18.0px;color:#000;-webkit-text-stroke:0.35px #000">[PhoneNumberType]</div>
<svg style="left:126px;top:219.30px" width="187" height="6"><path d="M0 2.5 Q2 -0.5 4 2.5 Q6 5.5 8 2.5 Q10 -0.5 12 2.5 Q14 5.5 16 2.5 Q18 -0.5 20 2.5 Q22 5.5 24 2.5 Q26 -0.5 28 2.5 Q30 5.5 32 2.5 Q34 -0.5 36 2.5 Q38 5.5 40 2.5 Q42 -0.5 44 2.5 Q46 5.5 48 2.5 Q50 -0.5 52 2.5 Q54 5.5 56 2.5 Q58 -0.5 60 2.5 Q62 5.5 64 2.5 Q66 -0.5 68 2.5 Q70 5.5 72 2.5 Q74 -0.5 76 2.5 Q78 5.5 80 2.5 Q82 -0.5 84 2.5 Q86 5.5 88 2.5 Q90 -0.5 92 2.5 Q94 5.5 96 2.5 Q98 -0.5 100 2.5 Q102 5.5 104 2.5 Q106 -0.5 108 2.5 Q110 5.5 112 2.5 Q114 -0.5 116 2.5 Q118 5.5 120 2.5 Q122 -0.5 124 2.5 Q126 5.5 128 2.5 Q130 -0.5 132 2.5 Q134 5.5 136 2.5 Q138 -0.5 140 2.5 Q142 5.5 144 2.5 Q146 -0.5 148 2.5 Q150 5.5 152 2.5 Q154 -0.5 156 2.5 Q158 5.5 160 2.5 Q162 -0.5 164 2.5 Q166 5.5 168 2.5 Q170 -0.5 172 2.5 Q174 5.5 176 2.5 Q178 -0.5 180 2.5 Q182 5.5 184 2.5" fill="none" stroke="#ff3c3c" stroke-width="1.15"/></svg>
<svg style="left:116.90px;top:238.10px" width="6" height="8"><path d="M2.2 0.8H5V3.2C5 5 4 6.3 1.2 7L0.8 5.9C2.3 5.4 2.9 4.7 3 3.6H2.2Z" fill="#808080"/></svg>
<div class="m" style="left:125.10px;top:227.60px;font-size:18.0px;color:#000;-webkit-text-stroke:0.35px #000">[EmailAddress]</div>
<svg style="left:126px;top:244.20px" width="154" height="6"><path d="M0 2.5 Q2 -0.5 4 2.5 Q6 5.5 8 2.5 Q10 -0.5 12 2.5 Q14 5.5 16 2.5 Q18 -0.5 20 2.5 Q22 5.5 24 2.5 Q26 -0.5 28 2.5 Q30 5.5 32 2.5 Q34 -0.5 36 2.5 Q38 5.5 40 2.5 Q42 -0.5 44 2.5 Q46 5.5 48 2.5 Q50 -0.5 52 2.5 Q54 5.5 56 2.5 Q58 -0.5 60 2.5 Q62 5.5 64 2.5 Q66 -0.5 68 2.5 Q70 5.5 72 2.5 Q74 -0.5 76 2.5 Q78 5.5 80 2.5 Q82 -0.5 84 2.5 Q86 5.5 88 2.5 Q90 -0.5 92 2.5 Q94 5.5 96 2.5 Q98 -0.5 100 2.5 Q102 5.5 104 2.5 Q106 -0.5 108 2.5 Q110 5.5 112 2.5 Q114 -0.5 116 2.5 Q118 5.5 120 2.5 Q122 -0.5 124 2.5 Q126 5.5 128 2.5 Q130 -0.5 132 2.5 Q134 5.5 136 2.5 Q138 -0.5 140 2.5 Q142 5.5 144 2.5 Q146 -0.5 148 2.5 Q150 5.5 152 2.5" fill="none" stroke="#ff3c3c" stroke-width="1.15"/></svg>
<svg style="left:116.90px;top:263.00px" width="6" height="8"><path d="M2.2 0.8H5V3.2C5 5 4 6.3 1.2 7L0.8 5.9C2.3 5.4 2.9 4.7 3 3.6H2.2Z" fill="#808080"/></svg>
<div class="m" style="left:125.10px;top:252.50px;font-size:18.0px;color:#000;-webkit-text-stroke:0.35px #000">[EmailPromotion]</div>
<svg style="left:126px;top:269.10px" width="176" height="6"><path d="M0 2.5 Q2 -0.5 4 2.5 Q6 5.5 8 2.5 Q10 -0.5 12 2.5 Q14 5.5 16 2.5 Q18 -0.5 20 2.5 Q22 5.5 24 2.5 Q26 -0.5 28 2.5 Q30 5.5 32 2.5 Q34 -0.5 36 2.5 Q38 5.5 40 2.5 Q42 -0.5 44 2.5 Q46 5.5 48 2.5 Q50 -0.5 52 2.5 Q54 5.5 56 2.5 Q58 -0.5 60 2.5 Q62 5.5 64 2.5 Q66 -0.5 68 2.5 Q70 5.5 72 2.5 Q74 -0.5 76 2.5 Q78 5.5 80 2.5 Q82 -0.5 84 2.5 Q86 5.5 88 2.5 Q90 -0.5 92 2.5 Q94 5.5 96 2.5 Q98 -0.5 100 2.5 Q102 5.5 104 2.5 Q106 -0.5 108 2.5 Q110 5.5 112 2.5 Q114 -0.5 116 2.5 Q118 5.5 120 2.5 Q122 -0.5 124 2.5 Q126 5.5 128 2.5 Q130 -0.5 132 2.5 Q134 5.5 136 2.5 Q138 -0.5 140 2.5 Q142 5.5 144 2.5 Q146 -0.5 148 2.5 Q150 5.5 152 2.5 Q154 -0.5 156 2.5 Q158 5.5 160 2.5 Q162 -0.5 164 2.5 Q166 5.5 168 2.5 Q170 -0.5 172 2.5" fill="none" stroke="#ff3c3c" stroke-width="1.15"/></svg>
</div>
<svg style="left:423px;top:123px" width="12" height="11"><rect x="0.5" y="0.5" width="11" height="10" fill="#fff" stroke="#9aa5a7"/><rect x="3" y="4.6" width="6.5" height="1.4" fill="#333"/></svg>
<div style="position:absolute;left:1881px;top:116px;width:14px;height:260px;background:#e8e8ec;"></div>
<div style="position:absolute;left:1883px;top:150px;width:3px;height:208px;background:#fde860;"></div>
<div style="position:absolute;left:1886px;top:150px;width:9px;height:63px;background:#c2c3c9;"></div>
<div style="position:absolute;left:388px;top:376px;width:1493px;height:17px;background:#e8e8ec;"></div>
<div style="position:absolute;left:1881px;top:376px;width:14px;height:17px;background:#e8e8ec;"></div>
<div style="position:absolute;left:388px;top:376px;width:60px;height:17px;background:#fff;border:1px solid #c5cfe3"></div>
<div class="t" style="left:390.15px;top:379.5px;font-size:10.5px;color:#1e1e1e;transform:scale(1.0594,1.0);transform-origin:0 13px;">131 %</div>
<svg style="left:440px;top:383px" width="5" height="3" viewBox="0 0 5 3"><path d="M0 0H5L2.5 3Z" fill="#1e1e1e"/></svg>
<svg style="left:453px;top:380px" width="5" height="9" viewBox="0 0 5 9"><path d="M5 0V9L0 4.5Z" fill="#c2c3c9"/></svg>
<svg style="left:1870px;top:380px" width="5" height="9" viewBox="0 0 5 9"><path d="M0 0V9L5 4.5Z" fill="#c2c3c9"/></svg>
<div style="position:absolute;left:388px;top:393px;width:1507px;height:27px;background:#f0f0f0;"></div>
<div style="position:absolute;left:388px;top:398px;width:73px;height:22px;background:#ffffff;border-top:1px solid #e3e3e3;border-right:1px solid #e3e3e3"></div>
<div style="position:absolute;left:461px;top:399px;width:78px;height:20px;background:#f0f0f0;border:1px solid #dcdcdc;border-bottom:none;border-left:none"></div>
<div class="t" style="left:418.4px;top:402px;font-size:12.5px;color:#1e1e1e;transform:scaleX(0.83);transform-origin:0 0">Results</div>
<div class="t" style="left:487.2px;top:404px;font-size:12.5px;color:#1e1e1e;transform:scaleX(0.83);transform-origin:0 0">Messages</div>
<svg style="left:398px;top:401px" width="13" height="12" viewBox="0 0 13 12"><rect width="13" height="12" fill="#3c3c3c"/><g fill="#fff"><rect x="1" y="3" width="3" height="2"/><rect x="5" y="3" width="3" height="2"/><rect x="9" y="3" width="3" height="2"/><rect x="1" y="6" width="3" height="2"/><rect x="5" y="6" width="3" height="2"/><rect x="9" y="6" width="3" height="2"/><rect x="1" y="9" width="3" height="2"/><rect x="5" y="9" width="3" height="2"/><rect x="9" y="9" width="3" height="2"/></g></svg>
<svg style="left:466px;top:402px" width="15" height="14" viewBox="0 0 15 14"><path d="M0.7 6.7H5.5L7.3 8.5V13.3H0.7Z" fill="#fff" stroke="#333" stroke-width="1.3"/><path d="M2 9.5H5.5M2 11.3H5.5" stroke="#333"/><rect x="8" y="0" width="6.5" height="11" fill="#3c3c3c"/><rect x="9" y="1.3" width="4.5" height="1" fill="#fff"/><rect x="9" y="3.3" width="4.5" height="1" fill="#fff"/><rect x="12" y="8.5" width="1.2" height="1.2" fill="#fff"/></svg>
<div style="position:absolute;left:388px;top:420px;width:1507px;height:451px;background:#ffffff;"></div>
<div style="position:absolute;left:388px;top:420px;width:1491px;height:451px;overflow:hidden;background:#fff">
<div style="position:absolute;left:178px;top:25px;width:54px;height:23px;background:#fffde6"></div>
<div style="position:absolute;left:510px;top:25px;width:54px;height:23px;background:#fffde6"></div>
<div style="position:absolute;left:178px;top:49px;width:54px;height:23px;background:#fffde6"></div>
<div style="position:absolute;left:510px;top:49px;width:54px;height:23px;background:#fffde6"></div>
<div style="position:absolute;left:178px;top:73px;width:54px;height:23px;background:#fffde6"></div>
<div style="position:absolute;left:319px;top:73px;width:99px;height:23px;background:#fffde6"></div>
<div style="position:absolute;left:510px;top:73px;width:54px;height:23px;background:#fffde6"></div>
<div style="position:absolute;left:178px;top:97px;width:54px;height:23px;background:#fffde6"></div>
<div style="position:absolute;left:319px;top:97px;width:99px;height:23px;background:#fffde6"></div>
<div style="position:absolute;left:510px;top:97px;width:54px;height:23px;background:#fffde6"></div>
<div style="position:absolute;left:510px;top:121px;width:54px;height:23px;background:#fffde6"></div>
<div style="position:absolute;left:510px;top:145px;width:54px;height:23px;background:#fffde6"></div>
<div style="position:absolute;left:178px;top:169px;width:54px;height:23px;background:#fffde6"></div>
<div style="position:absolute;left:510px;top:169px;width:54px;height:23px;background:#fffde6"></div>
<div style="position:absolute;left:178px;top:193px;width:54px;height:23px;background:#fffde6"></div>
<div style="position:absolute;left:510px;top:193px;width:54px;height:23px;background:#fffde6"></div>
<div style="position:absolute;left:178px;top:217px;width:54px;height:23px;background:#fffde6"></div>
<div style="position:absolute;left:510px;top:217px;width:54px;height:23px;background:#fffde6"></div>
<div style="position:absolute;left:178px;top:241px;width:54px;height:23px;background:#fffde6"></div>
<div style="position:absolute;left:319px;top:241px;width:99px;height:23px;background:#fffde6"></div>
<div style="position:absolute;left:510px;top:241px;width:54px;height:23px;background:#fffde6"></div>
<div style="position:absolute;left:178px;top:265px;width:54px;height:23px;background:#fffde6"></div>
<div style="position:absolute;left:510px;top:265px;width:54px;height:23px;background:#fffde6"></div>
<div style="position:absolute;left:178px;top:289px;width:54px;height:23px;background:#fffde6"></div>
<div style="position:absolute;left:510px;top:289px;width:54px;height:23px;background:#fffde6"></div>
<div style="position:absolute;left:510px;top:313px;width:54px;height:23px;background:#fffde6"></div>
<div style="position:absolute;left:178px;top:337px;width:54px;height:23px;background:#fffde6"></div>
<div style="position:absolute;left:510px;top:337px;width:54px;height:23px;background:#fffde6"></div>
<div style="position:absolute;left:178px;top:361px;width:54px;height:23px;background:#fffde6"></div>
<div style="position:absolute;left:510px;top:361px;width:54px;height:23px;background:#fffde6"></div>
<div style="position:absolute;left:178px;top:385px;width:54px;height:23px;background:#fffde6"></div>
<div style="position:absolute;left:510px;top:385px;width:54px;height:23px;background:#fffde6"></div>
<div style="position:absolute;left:178px;top:409px;width:54px;height:23px;background:#fffde6"></div>
<div style="position:absolute;left:510px;top:409px;width:54px;height:23px;background:#fffde6"></div>
<div style="position:absolute;left:178px;top:433px;width:54px;height:23px;background:#fffde6"></div>
<div style="position:absolute;left:510px;top:433px;width:54px;height:23px;background:#fffde6"></div>
<div style="position:absolute;left:49px;top:24px;width:129px;height:25px;background:#e6eaf0"></div>
<div style="position:absolute;left:4px;top:24px;width:1500px;height:1px;background:#e8e8e8"></div>
<div style="position:absolute;left:4px;top:48px;width:1500px;height:1px;background:#e8e8e8"></div>
<div style="position:absolute;left:4px;top:72px;width:1500px;height:1px;background:#e8e8e8"></div>
<div style="position:absolute;left:4px;top:96px;width:1500px;height:1px;background:#e8e8e8"></div>
<div style="position:absolute;left:4px;top:120px;width:1500px;height:1px;background:#e8e8e8"></div>
<div style="position:absolute;left:4px;top:144px;width:1500px;height:1px;background:#e8e8e8"></div>
<div style="position:absolute;left:4px;top:168px;width:1500px;height:1px;background:#e8e8e8"></div>
<div style="position:absolute;left:4px;top:192px;width:1500px;height:1px;background:#e8e8e8"></div>
<div style="position:absolute;left:4px;top:216px;width:1500px;height:1px;background:#e8e8e8"></div>
<div style="position:absolute;left:4px;top:240px;width:1500px;height:1px;background:#e8e8e8"></div>
<div style="position:absolute;left:4px;top:264px;width:1500px;height:1px;background:#e8e8e8"></div>
<div style="position:absolute;left:4px;top:288px;width:1500px;height:1px;background:#e8e8e8"></div>
<div style="position:absolute;left:4px;top:312px;width:1500px;height:1px;background:#e8e8e8"></div>
<div style="position:absolute;left:4px;top:336px;width:1500px;height:1px;background:#e8e8e8"></div>
<div style="position:absolute;left:4px;top:360px;width:1500px;height:1px;background:#e8e8e8"></div>
<div style="position:absolute;left:4px;top:384px;width:1500px;height:1px;background:#e8e8e8"></div>
<div style="position:absolute;left:4px;top:408px;width:1500px;height:1px;background:#e8e8e8"></div>
<div style="position:absolute;left:4px;top:432px;width:1500px;height:1px;background:#e8e8e8"></div>
<div style="position:absolute;left:48px;top:1px;width:1px;height:451px;background:#e8e8e8"></div>
<div style="position:absolute;left:177px;top:1px;width:1px;height:451px;background:#e8e8e8"></div>
<div style="position:absolute;left:232px;top:1px;width:1px;height:451px;background:#e8e8e8"></div>
<div style="position:absolute;left:318px;top:1px;width:1px;height:451px;background:#e8e8e8"></div>
<div style="position:absolute;left:418px;top:1px;width:1px;height:451px;background:#e8e8e8"></div>
<div style="position:absolute;left:509px;top:1px;width:1px;height:451px;background:#e8e8e8"></div>
<div style="position:absolute;left:564px;top:1px;width:1px;height:451px;background:#e8e8e8"></div>
<div style="position:absolute;left:826px;top:1px;width:1px;height:451px;background:#e8e8e8"></div>
<div style="position:absolute;left:939px;top:1px;width:1px;height:451px;background:#e8e8e8"></div>
<div style="position:absolute;left:1084px;top:1px;width:1px;height:451px;background:#e8e8e8"></div>
<div style="position:absolute;left:1319px;top:1px;width:1px;height:451px;background:#e8e8e8"></div>
<div style="position:absolute;left:1443px;top:1px;width:1px;height:451px;background:#e8e8e8"></div>
<div style="position:absolute;left:49px;top:24px;width:129px;height:25px;border:1px dotted #000"></div>
<div class="t" style="left:53.5px;top:5.399999999999977px;font-size:14.8px;transform:scaleY(1.04);transform-origin:0 12px">BusinessEntityID</div>
<div class="t" style="left:182.5px;top:5.399999999999977px;font-size:14.8px;transform:scaleY(1.04);transform-origin:0 12px">Title</div>
<div class="t" style="left:237.5px;top:5.399999999999977px;font-size:14.8px;transform:scaleY(1.04);transform-origin:0 12px">FirstName</div>
<div class="t" style="left:323.5px;top:5.399999999999977px;font-size:14.8px;transform:scaleY(1.04);transform-origin:0 12px">MiddleName</div>
<div class="t" style="left:423.5px;top:5.399999999999977px;font-size:14.8px;transform:scaleY(1.04);transform-origin:0 12px">LastName</div>
<div class="t" style="left:514.5px;top:5.399999999999977px;font-size:14.8px;transform:scaleY(1.04);transform-origin:0 12px">Suffix</div>
<div class="t" style="left:569.5px;top:5.399999999999977px;font-size:14.8px;transform:scaleY(1.04);transform-origin:0 12px">JobTitle</div>
<div class="t" style="left:831.5px;top:5.399999999999977px;font-size:14.8px;transform:scaleY(1.04);transform-origin:0 12px">PhoneNumber</div>
<div class="t" style="left:944.5px;top:5.399999999999977px;font-size:14.8px;transform:scaleY(1.04);transform-origin:0 12px">PhoneNumberType</div>
<div class="t" style="left:1089.5px;top:5.399999999999977px;font-size:14.8px;transform:scaleY(1.04);transform-origin:0 12px">EmailAddress</div>
<div class="t" style="left:1324.5px;top:5.399999999999977px;font-size:14.8px;transform:scaleY(1.04);transform-origin:0 12px">EmailPromotion</div>
<div class="t" style="left:1448.5px;top:5.399999999999977px;font-size:14.8px;transform:scaleY(1.04);transform-origin:0 12px">AddressLine1</div>
<div class="t" style="left:11.300000000000011px;top:30px;font-size:14.8px;transform:scaleY(1.08);transform-origin:0 12px">1</div>
<div class="t" style="left:55.80000000000001px;top:30px;font-size:14.8px;width:121px;overflow:hidden;transform:scaleY(1.08);transform-origin:0 12px">1</div>
<div class="t" style="left:184.79999999999995px;top:30px;font-size:14.8px;width:47px;overflow:hidden;transform:scaleY(1.08);transform-origin:0 12px">NULL</div>
<div class="t" style="left:239.79999999999995px;top:30px;font-size:14.8px;width:78px;overflow:hidden;transform:scaleY(1.08);transform-origin:0 12px">Ken</div>
<div class="t" style="left:325.79999999999995px;top:30px;font-size:14.8px;width:92px;overflow:hidden;transform:scaleY(1.08);transform-origin:0 12px">J</div>
<div class="t" style="left:425.79999999999995px;top:30px;font-size:14.8px;width:83px;overflow:hidden;transform:scaleY(1.08);transform-origin:0 12px">Sánchez</div>
<div class="t" style="left:516.8px;top:30px;font-size:14.8px;width:47px;overflow:hidden;transform:scaleY(1.08);transform-origin:0 12px">NULL</div>
<div class="t" style="left:571.8px;top:30px;font-size:14.8px;width:254px;overflow:hidden;transform:scaleY(1.08);transform-origin:0 12px">Chief Executive Officer</div>
<div class="t" style="left:833.8px;top:30px;font-size:14.8px;width:105px;overflow:hidden;transform:scaleY(1.08);transform-origin:0 12px">697-555-0142</div>
<div class="t" style="left:946.8px;top:30px;font-size:14.8px;width:137px;overflow:hidden;transform:scaleY(1.08);transform-origin:0 12px">Cell</div>
<div class="t" style="left:1091.8px;top:30px;font-size:14.8px;width:227px;overflow:hidden;transform:scaleY(1.08);transform-origin:0 12px">ken0@adventure-works.com</div>
<div class="t" style="left:1326.8px;top:30px;font-size:14.8px;width:116px;overflow:hidden;transform:scaleY(1.08);transform-origin:0 12px">0</div>
<div class="t" style="left:1450.8px;top:30px;font-size:14.8px;width:261px;overflow:hidden;transform:scaleY(1.08);transform-origin:0 12px">4350 Minute Dr.</div>
<div class="t" style="left:11.300000000000011px;top:54px;font-size:14.8px;transform:scaleY(1.08);transform-origin:0 12px">2</div>
<div class="t" style="left:55.80000000000001px;top:54px;font-size:14.8px;width:121px;overflow:hidden;transform:scaleY(1.08);transform-origin:0 12px">2</div>
<div class="t" style="left:184.79999999999995px;top:54px;font-size:14.8px;width:47px;overflow:hidden;transform:scaleY(1.08);transform-origin:0 12px">NULL</div>
<div class="t" style="left:239.79999999999995px;top:54px;font-size:14.8px;width:78px;overflow:hidden;transform:scaleY(1.08);transform-origin:0 12px">Terri</div>
<div class="t" style="left:325.79999999999995px;top:54px;font-size:14.8px;width:92px;overflow:hidden;transform:scaleY(1.08);transform-origin:0 12px">Lee</div>
<div class="t" style="left:425.79999999999995px;top:54px;font-size:14.8px;width:83px;overflow:hidden;transform:scaleY(1.08);transform-origin:0 12px">Duffy</div>
<div class="t" style="left:516.8px;top:54px;font-size:14.8px;width:47px;overflow:hidden;transform:scaleY(1.08);transform-origin:0 12px">NULL</div>
<div class="t" style="left:571.8px;top:54px;font-size:14.8px;width:254px;overflow:hidden;transform:scaleY(1.08);transform-origin:0 12px">Vice President of Engineering</div>
<div class="t" style="left:833.8px;top:54px;font-size:14.8px;width:105px;overflow:hidden;transform:scaleY(1.08);transform-origin:0 12px">819-555-0175</div>
<div class="t" style="left:946.8px;top:54px;font-size:14.8px;width:137px;overflow:hidden;transform:scaleY(1.08);transform-origin:0 12px">Work</div>
<div class="t" style="left:1091.8px;top:54px;font-size:14.8px;width:227px;overflow:hidden;transform:scaleY(1.08);transform-origin:0 12px">terri0@adventure-works.com</div>
<div class="t" style="left:1326.8px;top:54px;font-size:14.8px;width:116px;overflow:hidden;transform:scaleY(1.08);transform-origin:0 12px">1</div>
<div class="t" style="left:1450.8px;top:54px;font-size:14.8px;width:261px;overflow:hidden;transform:scaleY(1.08);transform-origin:0 12px">7559 Worth Ct.</div>
<div class="t" style="left:11.300000000000011px;top:78px;font-size:14.8px;transform:scaleY(1.08);transform-origin:0 12px">3</div>
<div class="t" style="left:55.80000000000001px;top:78px;font-size:14.8px;width:121px;overflow:hidden;transform:scaleY(1.08);transform-origin:0 12px">3</div>
<div class="t" style="left:184.79999999999995px;top:78px;font-size:14.8px;width:47px;overflow:hidden;transform:scaleY(1.08);transform-origin:0 12px">NULL</div>
<div class="t" style="left:239.79999999999995px;top:78px;font-size:14.8px;width:78px;overflow:hidden;transform:scaleY(1.08);transform-origin:0 12px">Roberto</div>
<div class="t" style="left:325.79999999999995px;top:78px;font-size:14.8px;width:92px;overflow:hidden;transform:scaleY(1.08);transform-origin:0 12px">NULL</div>
<div class="t" style="left:425.79999999999995px;top:78px;font-size:14.8px;width:83px;overflow:hidden;transform:scaleY(1.08);transform-origin:0 12px">Tamburello</div>
<div class="t" style="left:516.8px;top:78px;font-size:14.8px;width:47px;overflow:hidden;transform:scaleY(1.08);transform-origin:0 12px">NULL</div>
<div class="t" style="left:571.8px;top:78px;font-size:14.8px;width:254px;overflow:hidden;transform:scaleY(1.08);transform-origin:0 12px">Engineering Manager</div>
<div class="t" style="left:833.8px;top:78px;font-size:14.8px;width:105px;overflow:hidden;transform:scaleY(1.08);transform-origin:0 12px">212-555-0187</div>
<div class="t" style="left:946.8px;top:78px;font-size:14.8px;width:137px;overflow:hidden;transform:scaleY(1.08);transform-origin:0 12px">Cell</div>
<div class="t" style="left:1091.8px;top:78px;font-size:14.8px;width:227px;overflow:hidden;transform:scaleY(1.08);transform-origin:0 12px">roberto0@adventure-works.com</div>
<div class="t" style="left:1326.8px;top:78px;font-size:14.8px;width:116px;overflow:hidden;transform:scaleY(1.08);transform-origin:0 12px">0</div>
<div class="t" style="left:1450.8px;top:78px;font-size:14.8px;width:261px;overflow:hidden;transform:scaleY(1.08);transform-origin:0 12px">2137 Birchwood Dr</div>
<div class="t" style="left:11.300000000000011px;top:102px;font-size:14.8px;transform:scaleY(1.08);transform-origin:0 12px">4</div>
<div class="t" style="left:55.80000000000001px;top:102px;font-size:14.8px;width:121px;overflow:hidden;transform:scaleY(1.08);transform-origin:0 12px">4</div>
<div class="t" style="left:184.79999999999995px;top:102px;font-size:14.8px;width:47px;overflow:hidden;transform:scaleY(1.08);transform-origin:0 12px">NULL</div>
<div class="t" style="left:239.79999999999995px;top:102px;font-size:14.8px;width:78px;overflow:hidden;transform:scaleY(1.08);transform-origin:0 12px">Rob</div>
<div class="t" style="left:325.79999999999995px;top:102px;font-size:14.8px;width:92px;overflow:hidden;transform:scaleY(1.08);transform-origin:0 12px">NULL</div>
<div class="t" style="left:425.79999999999995px;top:102px;font-size:14.8px;width:83px;overflow:hidden;transform:scaleY(1.08);transform-origin:0 12px">Walters</div>
<div class="t" style="left:516.8px;top:102px;font-size:14.8px;width:47px;overflow:hidden;transform:scaleY(1.08);transform-origin:0 12px">NULL</div>
<div class="t" style="left:571.8px;top:102px;font-size:14.8px;width:254px;overflow:hidden;transform:scaleY(1.08);transform-origin:0 12px">Senior Tool Designer</div>
<div class="t" style="left:833.8px;top:102px;font-size:14.8px;width:105px;overflow:hidden;transform:scaleY(1.08);transform-origin:0 12px">612-555-0100</div>
<div class="t" style="left:946.8px;top:102px;font-size:14.8px;width:137px;overflow:hidden;transform:scaleY(1.08);transform-origin:0 12px">Cell</div>
<div class="t" style="left:1091.8px;top:102px;font-size:14.8px;width:227px;overflow:hidden;transform:scaleY(1.08);transform-origin:0 12px">rob0@adventure-works.com</div>
<div class="t" style="left:1326.8px;top:102px;font-size:14.8px;width:116px;overflow:hidden;transform:scaleY(1.08);transform-origin:0 12px">0</div>
<div class="t" style="left:1450.8px;top:102px;font-size:14.8px;width:261px;overflow:hidden;transform:scaleY(1.08);transform-origin:0 12px">5678 Lakeview Blvd.</div>
<div class="t" style="left:11.300000000000011px;top:126px;font-size:14.8px;transform:scaleY(1.08);transform-origin:0 12px">5</div>
<div class="t" style="left:55.80000000000001px;top:126px;font-size:14.8px;width:121px;overflow:hidden;transform:scaleY(1.08);transform-origin:0 12px">5</div>
<div class="t" style="left:184.79999999999995px;top:126px;font-size:14.8px;width:47px;overflow:hidden;transform:scaleY(1.08);transform-origin:0 12px">Ms.</div>
<div class="t" style="left:239.79999999999995px;top:126px;font-size:14.8px;width:78px;overflow:hidden;transform:scaleY(1.08);transform-origin:0 12px">Gail</div>
<div class="t" style="left:325.79999999999995px;top:126px;font-size:14.8px;width:92px;overflow:hidden;transform:scaleY(1.08);transform-origin:0 12px">A</div>
<div class="t" style="left:425.79999999999995px;top:126px;font-size:14.8px;width:83px;overflow:hidden;transform:scaleY(1.08);transform-origin:0 12px">Erickson</div>
<div class="t" style="left:516.8px;top:126px;font-size:14.8px;width:47px;overflow:hidden;transform:scaleY(1.08);transform-origin:0 12px">NULL</div>
<div class="t" style="left:571.8px;top:126px;font-size:14.8px;width:254px;overflow:hidden;transform:scaleY(1.08);transform-origin:0 12px">Design Engineer</div>
<div class="t" style="left:833.8px;top:126px;font-size:14.8px;width:105px;overflow:hidden;transform:scaleY(1.08);transform-origin:0 12px">849-555-0139</div>
<div class="t" style="left:946.8px;top:126px;font-size:14.8px;width:137px;overflow:hidden;transform:scaleY(1.08);transform-origin:0 12px">Cell</div>
<div class="t" style="left:1091.8px;top:126px;font-size:14.8px;width:227px;overflow:hidden;transform:scaleY(1.08);transform-origin:0 12px">gail0@adventure-works.com</div>
<div class="t" style="left:1326.8px;top:126px;font-size:14.8px;width:116px;overflow:hidden;transform:scaleY(1.08);transform-origin:0 12px">0</div>
<div class="t" style="left:1450.8px;top:126px;font-size:14.8px;width:261px;overflow:hidden;transform:scaleY(1.08);transform-origin:0 12px">9435 Breck Court</div>
<div class="t" style="left:11.300000000000011px;top:150px;font-size:14.8px;transform:scaleY(1.08);transform-origin:0 12px">6</div>
<div class="t" style="left:55.80000000000001px;top:150px;font-size:14.8px;width:121px;overflow:hidden;transform:scaleY(1.08);transform-origin:0 12px">6</div>
<div class="t" style="left:184.79999999999995px;top:150px;font-size:14.8px;width:47px;overflow:hidden;transform:scaleY(1.08);transform-origin:0 12px">Mr.</div>
<div class="t" style="left:239.79999999999995px;top:150px;font-size:14.8px;width:78px;overflow:hidden;transform:scaleY(1.08);transform-origin:0 12px">Jossef</div>
<div class="t" style="left:325.79999999999995px;top:150px;font-size:14.8px;width:92px;overflow:hidden;transform:scaleY(1.08);transform-origin:0 12px">H</div>
<div class="t" style="left:425.79999999999995px;top:150px;font-size:14.8px;width:83px;overflow:hidden;transform:scaleY(1.08);transform-origin:0 12px">Goldberg</div>
<div class="t" style="left:516.8px;top:150px;font-size:14.8px;width:47px;overflow:hidden;transform:scaleY(1.08);transform-origin:0 12px">NULL</div>
<div class="t" style="left:571.8px;top:150px;font-size:14.8px;width:254px;overflow:hidden;transform:scaleY(1.08);transform-origin:0 12px">Design Engineer</div>
<div class="t" style="left:833.8px;top:150px;font-size:14.8px;width:105px;overflow:hidden;transform:scaleY(1.08);transform-origin:0 12px">122-555-0189</div>
<div class="t" style="left:946.8px;top:150px;font-size:14.8px;width:137px;overflow:hidden;transform:scaleY(1.08);transform-origin:0 12px">Work</div>
<div class="t" style="left:1091.8px;top:150px;font-size:14.8px;width:227px;overflow:hidden;transform:scaleY(1.08);transform-origin:0 12px">jossef0@adventure-works.com</div>
<div class="t" style="left:1326.8px;top:150px;font-size:14.8px;width:116px;overflow:hidden;transform:scaleY(1.08);transform-origin:0 12px">0</div>
<div class="t" style="left:1450.8px;top:150px;font-size:14.8px;width:261px;overflow:hidden;transform:scaleY(1.08);transform-origin:0 12px">5670 Bel Air Dr.</div>
<div class="t" style="left:11.300000000000011px;top:174px;font-size:14.8px;transform:scaleY(1.08);transform-origin:0 12px">7</div>
<div class="t" style="left:55.80000000000001px;top:174px;font-size:14.8px;width:121px;overflow:hidden;transform:scaleY(1.08);transform-origin:0 12px">7</div>
<div class="t" style="left:184.79999999999995px;top:174px;font-size:14.8px;width:47px;overflow:hidden;transform:scaleY(1.08);transform-origin:0 12px">NULL</div>
<div class="t" style="left:239.79999999999995px;top:174px;font-size:14.8px;width:78px;overflow:hidden;transform:scaleY(1.08);transform-origin:0 12px">Dylan</div>
<div class="t" style="left:325.79999999999995px;top:174px;font-size:14.8px;width:92px;overflow:hidden;transform:scaleY(1.08);transform-origin:0 12px">A</div>
<div class="t" style="left:425.79999999999995px;top:174px;font-size:14.8px;width:83px;overflow:hidden;transform:scaleY(1.08);transform-origin:0 12px">Miller</div>
<div class="t" style="left:516.8px;top:174px;font-size:14.8px;width:47px;overflow:hidden;transform:scaleY(1.08);transform-origin:0 12px">NULL</div>
<div class="t" style="left:571.8px;top:174px;font-size:14.8px;width:254px;overflow:hidden;transform:scaleY(1.08);transform-origin:0 12px">Research and Development Manager</div>
<div class="t" style="left:833.8px;top:174px;font-size:14.8px;width:105px;overflow:hidden;transform:scaleY(1.08);transform-origin:0 12px">181-555-0156</div>
<div class="t" style="left:946.8px;top:174px;font-size:14.8px;width:137px;overflow:hidden;transform:scaleY(1.08);transform-origin:0 12px">Work</div>
<div class="t" style="left:1091.8px;top:174px;font-size:14.8px;width:227px;overflow:hidden;transform:scaleY(1.08);transform-origin:0 12px">dylan0@adventure-works.com</div>
<div class="t" style="left:1326.8px;top:174px;font-size:14.8px;width:116px;overflow:hidden;transform:scaleY(1.08);transform-origin:0 12px">2</div>
<div class="t" style="left:1450.8px;top:174px;font-size:14.8px;width:261px;overflow:hidden;transform:scaleY(1.08);transform-origin:0 12px">7048 Laurel</div>
<div class="t" style="left:11.300000000000011px;top:198px;font-size:14.8px;transform:scaleY(1.08);transform-origin:0 12px">8</div>
<div class="t" style="left:55.80000000000001px;top:198px;font-size:14.8px;width:121px;overflow:hidden;transform:scaleY(1.08);transform-origin:0 12px">8</div>
<div class="t" style="left:184.79999999999995px;top:198px;font-size:14.8px;width:47px;overflow:hidden;transform:scaleY(1.08);transform-origin:0 12px">NULL</div>
<div class="t" style="left:239.79999999999995px;top:198px;font-size:14.8px;width:78px;overflow:hidden;transform:scaleY(1.08);transform-origin:0 12px">Diane</div>
<div class="t" style="left:325.79999999999995px;top:198px;font-size:14.8px;width:92px;overflow:hidden;transform:scaleY(1.08);transform-origin:0 12px">L</div>
<div class="t" style="left:425.79999999999995px;top:198px;font-size:14.8px;width:83px;overflow:hidden;transform:scaleY(1.08);transform-origin:0 12px">Margheim</div>
<div class="t" style="left:516.8px;top:198px;font-size:14.8px;width:47px;overflow:hidden;transform:scaleY(1.08);transform-origin:0 12px">NULL</div>
<div class="t" style="left:571.8px;top:198px;font-size:14.8px;width:254px;overflow:hidden;transform:scaleY(1.08);transform-origin:0 12px">Research and Development Engineer</div>
<div class="t" style="left:833.8px;top:198px;font-size:14.8px;width:105px;overflow:hidden;transform:scaleY(1.08);transform-origin:0 12px">815-555-0138</div>
<div class="t" style="left:946.8px;top:198px;font-size:14.8px;width:137px;overflow:hidden;transform:scaleY(1.08);transform-origin:0 12px">Cell</div>
<div class="t" style="left:1091.8px;top:198px;font-size:14.8px;width:227px;overflow:hidden;transform:scaleY(1.08);transform-origin:0 12px">diane1@adventure-works.com</div>
<div class="t" style="left:1326.8px;top:198px;font-size:14.8px;width:116px;overflow:hidden;transform:scaleY(1.08);transform-origin:0 12px">0</div>
<div class="t" style="left:1450.8px;top:198px;font-size:14.8px;width:261px;overflow:hidden;transform:scaleY(1.08);transform-origin:0 12px">475 Santa Maria</div>
<div class="t" style="left:11.300000000000011px;top:222px;font-size:14.8px;transform:scaleY(1.08);transform-origin:0 12px">9</div>
<div class="t" style="left:55.80000000000001px;top:222px;font-size:14.8px;width:121px;overflow:hidden;transform:scaleY(1.08);transform-origin:0 12px">9</div>
<div class="t" style="left:184.79999999999995px;top:222px;font-size:14.8px;width:47px;overflow:hidden;transform:scaleY(1.08);transform-origin:0 12px">NULL</div>
<div class="t" style="left:239.79999999999995px;top:222px;font-size:14.8px;width:78px;overflow:hidden;transform:scaleY(1.08);transform-origin:0 12px">Gigi</div>
<div class="t" style="left:325.79999999999995px;top:222px;font-size:14.8px;width:92px;overflow:hidden;transform:scaleY(1.08);transform-origin:0 12px">N</div>
<div class="t" style="left:425.79999999999995px;top:222px;font-size:14.8px;width:83px;overflow:hidden;transform:scaleY(1.08);transform-origin:0 12px">Matthew</div>
<div class="t" style="left:516.8px;top:222px;font-size:14.8px;width:47px;overflow:hidden;transform:scaleY(1.08);transform-origin:0 12px">NULL</div>
<div class="t" style="left:571.8px;top:222px;font-size:14.8px;width:254px;overflow:hidden;transform:scaleY(1.08);transform-origin:0 12px">Research and Development Engineer</div>
<div class="t" style="left:833.8px;top:222px;font-size:14.8px;width:105px;overflow:hidden;transform:scaleY(1.08);transform-origin:0 12px">185-555-0186</div>
<div class="t" style="left:946.8px;top:222px;font-size:14.8px;width:137px;overflow:hidden;transform:scaleY(1.08);transform-origin:0 12px">Cell</div>
<div class="t" style="left:1091.8px;top:222px;font-size:14.8px;width:227px;overflow:hidden;transform:scaleY(1.08);transform-origin:0 12px">gigi0@adventure-works.com</div>
<div class="t" style="left:1326.8px;top:222px;font-size:14.8px;width:116px;overflow:hidden;transform:scaleY(1.08);transform-origin:0 12px">0</div>
<div class="t" style="left:1450.8px;top:222px;font-size:14.8px;width:261px;overflow:hidden;transform:scaleY(1.08);transform-origin:0 12px">7808 Brown St.</div>
<div class="t" style="left:11.300000000000011px;top:246px;font-size:14.8px;transform:scaleY(1.08);transform-origin:0 12px">10</div>
<div class="t" style="left:55.80000000000001px;top:246px;font-size:14.8px;width:121px;overflow:hidden;transform:scaleY(1.08);transform-origin:0 12px">10</div>
<div class="t" style="left:184.79999999999995px;top:246px;font-size:14.8px;width:47px;overflow:hidden;transform:scaleY(1.08);transform-origin:0 12px">NULL</div>
<div class="t" style="left:239.79999999999995px;top:246px;font-size:14.8px;width:78px;overflow:hidden;transform:scaleY(1.08);transform-origin:0 12px">Michael</div>
<div class="t" style="left:325.79999999999995px;top:246px;font-size:14.8px;width:92px;overflow:hidden;transform:scaleY(1.08);transform-origin:0 12px">NULL</div>
<div class="t" style="left:425.79999999999995px;top:246px;font-size:14.8px;width:83px;overflow:hidden;transform:scaleY(1.08);transform-origin:0 12px">Raheem</div>
<div class="t" style="left:516.8px;top:246px;font-size:14.8px;width:47px;overflow:hidden;transform:scaleY(1.08);transform-origin:0 12px">NULL</div>
<div class="t" style="left:571.8px;top:246px;font-size:14.8px;width:254px;overflow:hidden;transform:scaleY(1.08);transform-origin:0 12px">Research and Development Manager</div>
<div class="t" style="left:833.8px;top:246px;font-size:14.8px;width:105px;overflow:hidden;transform:scaleY(1.08);transform-origin:0 12px">330-555-2568</div>
<div class="t" style="left:946.8px;top:246px;font-size:14.8px;width:137px;overflow:hidden;transform:scaleY(1.08);transform-origin:0 12px">Work</div>
<div class="t" style="left:1091.8px;top:246px;font-size:14.8px;width:227px;overflow:hidden;transform:scaleY(1.08);transform-origin:0 12px">michael6@adventure-works.com</div>
<div class="t" style="left:1326.8px;top:246px;font-size:14.8px;width:116px;overflow:hidden;transform:scaleY(1.08);transform-origin:0 12px">2</div>
<div class="t" style="left:1450.8px;top:246px;font-size:14.8px;width:261px;overflow:hidden;transform:scaleY(1.08);transform-origin:0 12px">1234 Seaview Way</div>
<div class="t" style="left:11.300000000000011px;top:270px;font-size:14.8px;transform:scaleY(1.08);transform-origin:0 12px">11</div>
<div class="t" style="left:55.80000000000001px;top:270px;font-size:14.8px;width:121px;overflow:hidden;transform:scaleY(1.08);transform-origin:0 12px">11</div>
<div class="t" style="left:184.79999999999995px;top:270px;font-size:14.8px;width:47px;overflow:hidden;transform:scaleY(1.08);transform-origin:0 12px">NULL</div>
<div class="t" style="left:239.79999999999995px;top:270px;font-size:14.8px;width:78px;overflow:hidden;transform:scaleY(1.08);transform-origin:0 12px">Ovidiu</div>
<div class="t" style="left:325.79999999999995px;top:270px;font-size:14.8px;width:92px;overflow:hidden;transform:scaleY(1.08);transform-origin:0 12px">V</div>
<div class="t" style="left:425.79999999999995px;top:270px;font-size:14.8px;width:83px;overflow:hidden;transform:scaleY(1.08);transform-origin:0 12px">Cracium</div>
<div class="t" style="left:516.8px;top:270px;font-size:14.8px;width:47px;overflow:hidden;transform:scaleY(1.08);transform-origin:0 12px">NULL</div>
<div class="t" style="left:571.8px;top:270px;font-size:14.8px;width:254px;overflow:hidden;transform:scaleY(1.08);transform-origin:0 12px">Senior Tool Designer</div>
<div class="t" style="left:833.8px;top:270px;font-size:14.8px;width:105px;overflow:hidden;transform:scaleY(1.08);transform-origin:0 12px">719-555-0181</div>
<div class="t" style="left:946.8px;top:270px;font-size:14.8px;width:137px;overflow:hidden;transform:scaleY(1.08);transform-origin:0 12px">Cell</div>
<div class="t" style="left:1091.8px;top:270px;font-size:14.8px;width:227px;overflow:hidden;transform:scaleY(1.08);transform-origin:0 12px">ovidiu0@adventure-works.com</div>
<div class="t" style="left:1326.8px;top:270px;font-size:14.8px;width:116px;overflow:hidden;transform:scaleY(1.08);transform-origin:0 12px">0</div>
<div class="t" style="left:1450.8px;top:270px;font-size:14.8px;width:261px;overflow:hidden;transform:scaleY(1.08);transform-origin:0 12px">5458 Gladstone Drive</div>
<div class="t" style="left:11.300000000000011px;top:294px;font-size:14.8px;transform:scaleY(1.08);transform-origin:0 12px">12</div>
<div class="t" style="left:55.80000000000001px;top:294px;font-size:14.8px;width:121px;overflow:hidden;transform:scaleY(1.08);transform-origin:0 12px">12</div>
<div class="t" style="left:184.79999999999995px;top:294px;font-size:14.8px;width:47px;overflow:hidden;transform:scaleY(1.08);transform-origin:0 12px">NULL</div>
<div class="t" style="left:239.79999999999995px;top:294px;font-size:14.8px;width:78px;overflow:hidden;transform:scaleY(1.08);transform-origin:0 12px">Thierry</div>
<div class="t" style="left:325.79999999999995px;top:294px;font-size:14.8px;width:92px;overflow:hidden;transform:scaleY(1.08);transform-origin:0 12px">B</div>
<div class="t" style="left:425.79999999999995px;top:294px;font-size:14.8px;width:83px;overflow:hidden;transform:scaleY(1.08);transform-origin:0 12px">D'Hers</div>
<div class="t" style="left:516.8px;top:294px;font-size:14.8px;width:47px;overflow:hidden;transform:scaleY(1.08);transform-origin:0 12px">NULL</div>
<div class="t" style="left:571.8px;top:294px;font-size:14.8px;width:254px;overflow:hidden;transform:scaleY(1.08);transform-origin:0 12px">Tool Designer</div>
<div class="t" style="left:833.8px;top:294px;font-size:14.8px;width:105px;overflow:hidden;transform:scaleY(1.08);transform-origin:0 12px">168-555-0183</div>
<div class="t" style="left:946.8px;top:294px;font-size:14.8px;width:137px;overflow:hidden;transform:scaleY(1.08);transform-origin:0 12px">Work</div>
<div class="t" style="left:1091.8px;top:294px;font-size:14.8px;width:227px;overflow:hidden;transform:scaleY(1.08);transform-origin:0 12px">thierry0@adventure-works.com</div>
<div class="t" style="left:1326.8px;top:294px;font-size:14.8px;width:116px;overflow:hidden;transform:scaleY(1.08);transform-origin:0 12px">2</div>
<div class="t" style="left:1450.8px;top:294px;font-size:14.8px;width:261px;overflow:hidden;transform:scaleY(1.08);transform-origin:0 12px">1970 Napa Ct.</div>
<div class="t" style="left:11.300000000000011px;top:318px;font-size:14.8px;transform:scaleY(1.08);transform-origin:0 12px">13</div>
<div class="t" style="left:55.80000000000001px;top:318px;font-size:14.8px;width:121px;overflow:hidden;transform:scaleY(1.08);transform-origin:0 12px">13</div>
<div class="t" style="left:184.79999999999995px;top:318px;font-size:14.8px;width:47px;overflow:hidden;transform:scaleY(1.08);transform-origin:0 12px">Ms.</div>
<div class="t" style="left:239.79999999999995px;top:318px;font-size:14.8px;width:78px;overflow:hidden;transform:scaleY(1.08);transform-origin:0 12px">Janice</div>
<div class="t" style="left:325.79999999999995px;top:318px;font-size:14.8px;width:92px;overflow:hidden;transform:scaleY(1.08);transform-origin:0 12px">M</div>
<div class="t" style="left:425.79999999999995px;top:318px;font-size:14.8px;width:83px;overflow:hidden;transform:scaleY(1.08);transform-origin:0 12px">Galvin</div>
<div class="t" style="left:516.8px;top:318px;font-size:14.8px;width:47px;overflow:hidden;transform:scaleY(1.08);transform-origin:0 12px">NULL</div>
<div class="t" style="left:571.8px;top:318px;font-size:14.8px;width:254px;overflow:hidden;transform:scaleY(1.08);transform-origin:0 12px">Tool Designer</div>
<div class="t" style="left:833.8px;top:318px;font-size:14.8px;width:105px;overflow:hidden;transform:scaleY(1.08);transform-origin:0 12px">473-555-0117</div>
<div class="t" style="left:946.8px;top:318px;font-size:14.8px;width:137px;overflow:hidden;transform:scaleY(1.08);transform-origin:0 12px">Work</div>
<div class="t" style="left:1091.8px;top:318px;font-size:14.8px;width:227px;overflow:hidden;transform:scaleY(1.08);transform-origin:0 12px">janice0@adventure-works.com</div>
<div class="t" style="left:1326.8px;top:318px;font-size:14.8px;width:116px;overflow:hidden;transform:scaleY(1.08);transform-origin:0 12px">2</div>
<div class="t" style="left:1450.8px;top:318px;font-size:14.8px;width:261px;overflow:hidden;transform:scaleY(1.08);transform-origin:0 12px">3397 Rancho View</div>
<div class="t" style="left:11.300000000000011px;top:342px;font-size:14.8px;transform:scaleY(1.08);transform-origin:0 12px">14</div>
<div class="t" style="left:55.80000000000001px;top:342px;font-size:14.8px;width:121px;overflow:hidden;transform:scaleY(1.08);transform-origin:0 12px">14</div>
<div class="t" style="left:184.79999999999995px;top:342px;font-size:14.8px;width:47px;overflow:hidden;transform:scaleY(1.08);transform-origin:0 12px">NULL</div>
<div class="t" style="left:239.79999999999995px;top:342px;font-size:14.8px;width:78px;overflow:hidden;transform:scaleY(1.08);transform-origin:0 12px">Michael</div>
<div class="t" style="left:325.79999999999995px;top:342px;font-size:14.8px;width:92px;overflow:hidden;transform:scaleY(1.08);transform-origin:0 12px">I</div>
<div class="t" style="left:425.79999999999995px;top:342px;font-size:14.8px;width:83px;overflow:hidden;transform:scaleY(1.08);transform-origin:0 12px">Sullivan</div>
<div class="t" style="left:516.8px;top:342px;font-size:14.8px;width:47px;overflow:hidden;transform:scaleY(1.08);transform-origin:0 12px">NULL</div>
<div class="t" style="left:571.8px;top:342px;font-size:14.8px;width:254px;overflow:hidden;transform:scaleY(1.08);transform-origin:0 12px">Senior Design Engineer</div>
<div class="t" style="left:833.8px;top:342px;font-size:14.8px;width:105px;overflow:hidden;transform:scaleY(1.08);transform-origin:0 12px">465-555-0156</div>
<div class="t" style="left:946.8px;top:342px;font-size:14.8px;width:137px;overflow:hidden;transform:scaleY(1.08);transform-origin:0 12px">Cell</div>
<div class="t" style="left:1091.8px;top:342px;font-size:14.8px;width:227px;overflow:hidden;transform:scaleY(1.08);transform-origin:0 12px">michael8@adventure-works.com</div>
<div class="t" style="left:1326.8px;top:342px;font-size:14.8px;width:116px;overflow:hidden;transform:scaleY(1.08);transform-origin:0 12px">2</div>
<div class="t" style="left:1450.8px;top:342px;font-size:14.8px;width:261px;overflow:hidden;transform:scaleY(1.08);transform-origin:0 12px">6510 Hacienda Drive</div>
<div class="t" style="left:11.300000000000011px;top:366px;font-size:14.8px;transform:scaleY(1.08);transform-origin:0 12px">15</div>
<div class="t" style="left:55.80000000000001px;top:366px;font-size:14.8px;width:121px;overflow:hidden;transform:scaleY(1.08);transform-origin:0 12px">15</div>
<div class="t" style="left:184.79999999999995px;top:366px;font-size:14.8px;width:47px;overflow:hidden;transform:scaleY(1.08);transform-origin:0 12px">NULL</div>
<div class="t" style="left:239.79999999999995px;top:366px;font-size:14.8px;width:78px;overflow:hidden;transform:scaleY(1.08);transform-origin:0 12px">Sharon</div>
<div class="t" style="left:325.79999999999995px;top:366px;font-size:14.8px;width:92px;overflow:hidden;transform:scaleY(1.08);transform-origin:0 12px">B</div>
<div class="t" style="left:425.79999999999995px;top:366px;font-size:14.8px;width:83px;overflow:hidden;transform:scaleY(1.08);transform-origin:0 12px">Salavaria</div>
<div class="t" style="left:516.8px;top:366px;font-size:14.8px;width:47px;overflow:hidden;transform:scaleY(1.08);transform-origin:0 12px">NULL</div>
<div class="t" style="left:571.8px;top:366px;font-size:14.8px;width:254px;overflow:hidden;transform:scaleY(1.08);transform-origin:0 12px">Design Engineer</div>
<div class="t" style="left:833.8px;top:366px;font-size:14.8px;width:105px;overflow:hidden;transform:scaleY(1.08);transform-origin:0 12px">970-555-0138</div>
<div class="t" style="left:946.8px;top:366px;font-size:14.8px;width:137px;overflow:hidden;transform:scaleY(1.08);transform-origin:0 12px">Cell</div>
<div class="t" style="left:1091.8px;top:366px;font-size:14.8px;width:227px;overflow:hidden;transform:scaleY(1.08);transform-origin:0 12px">sharon0@adventure-works.com</div>
<div class="t" style="left:1326.8px;top:366px;font-size:14.8px;width:116px;overflow:hidden;transform:scaleY(1.08);transform-origin:0 12px">2</div>
<div class="t" style="left:1450.8px;top:366px;font-size:14.8px;width:261px;overflow:hidden;transform:scaleY(1.08);transform-origin:0 12px">7165 Brock Lane</div>
<div class="t" style="left:11.300000000000011px;top:390px;font-size:14.8px;transform:scaleY(1.08);transform-origin:0 12px">16</div>
<div class="t" style="left:55.80000000000001px;top:390px;font-size:14.8px;width:121px;overflow:hidden;transform:scaleY(1.08);transform-origin:0 12px">16</div>
<div class="t" style="left:184.79999999999995px;top:390px;font-size:14.8px;width:47px;overflow:hidden;transform:scaleY(1.08);transform-origin:0 12px">NULL</div>
<div class="t" style="left:239.79999999999995px;top:390px;font-size:14.8px;width:78px;overflow:hidden;transform:scaleY(1.08);transform-origin:0 12px">David</div>
<div class="t" style="left:325.79999999999995px;top:390px;font-size:14.8px;width:92px;overflow:hidden;transform:scaleY(1.08);transform-origin:0 12px">M</div>
<div class="t" style="left:425.79999999999995px;top:390px;font-size:14.8px;width:83px;overflow:hidden;transform:scaleY(1.08);transform-origin:0 12px">Bradley</div>
<div class="t" style="left:516.8px;top:390px;font-size:14.8px;width:47px;overflow:hidden;transform:scaleY(1.08);transform-origin:0 12px">NULL</div>
<div class="t" style="left:571.8px;top:390px;font-size:14.8px;width:254px;overflow:hidden;transform:scaleY(1.08);transform-origin:0 12px">Marketing Manager</div>
<div class="t" style="left:833.8px;top:390px;font-size:14.8px;width:105px;overflow:hidden;transform:scaleY(1.08);transform-origin:0 12px">913-555-0172</div>
<div class="t" style="left:946.8px;top:390px;font-size:14.8px;width:137px;overflow:hidden;transform:scaleY(1.08);transform-origin:0 12px">Work</div>
<div class="t" style="left:1091.8px;top:390px;font-size:14.8px;width:227px;overflow:hidden;transform:scaleY(1.08);transform-origin:0 12px">david0@adventure-works.com</div>
<div class="t" style="left:1326.8px;top:390px;font-size:14.8px;width:116px;overflow:hidden;transform:scaleY(1.08);transform-origin:0 12px">1</div>
<div class="t" style="left:1450.8px;top:390px;font-size:14.8px;width:261px;overflow:hidden;transform:scaleY(1.08);transform-origin:0 12px">3768 Door Way</div>
<div class="t" style="left:11.300000000000011px;top:414px;font-size:14.8px;transform:scaleY(1.08);transform-origin:0 12px">17</div>
<div class="t" style="left:55.80000000000001px;top:414px;font-size:14.8px;width:121px;overflow:hidden;transform:scaleY(1.08);transform-origin:0 12px">17</div>
<div class="t" style="left:184.79999999999995px;top:414px;font-size:14.8px;width:47px;overflow:hidden;transform:scaleY(1.08);transform-origin:0 12px">NULL</div>
<div class="t" style="left:239.79999999999995px;top:414px;font-size:14.8px;width:78px;overflow:hidden;transform:scaleY(1.08);transform-origin:0 12px">Kevin</div>
<div class="t" style="left:325.79999999999995px;top:414px;font-size:14.8px;width:92px;overflow:hidden;transform:scaleY(1.08);transform-origin:0 12px">F</div>
<div class="t" style="left:425.79999999999995px;top:414px;font-size:14.8px;width:83px;overflow:hidden;transform:scaleY(1.08);transform-origin:0 12px">Brown</div>
<div class="t" style="left:516.8px;top:414px;font-size:14.8px;width:47px;overflow:hidden;transform:scaleY(1.08);transform-origin:0 12px">NULL</div>
<div class="t" style="left:571.8px;top:414px;font-size:14.8px;width:254px;overflow:hidden;transform:scaleY(1.08);transform-origin:0 12px">Marketing Assistant</div>
<div class="t" style="left:833.8px;top:414px;font-size:14.8px;width:105px;overflow:hidden;transform:scaleY(1.08);transform-origin:0 12px">150-555-0189</div>
<div class="t" style="left:946.8px;top:414px;font-size:14.8px;width:137px;overflow:hidden;transform:scaleY(1.08);transform-origin:0 12px">Cell</div>
<div class="t" style="left:1091.8px;top:414px;font-size:14.8px;width:227px;overflow:hidden;transform:scaleY(1.08);transform-origin:0 12px">kevin0@adventure-works.com</div>
<div class="t" style="left:1326.8px;top:414px;font-size:14.8px;width:116px;overflow:hidden;transform:scaleY(1.08);transform-origin:0 12px">2</div>
<div class="t" style="left:1450.8px;top:414px;font-size:14.8px;width:261px;overflow:hidden;transform:scaleY(1.08);transform-origin:0 12px">7883 Missing Canyon Court</div>
<div class="t" style="left:11.300000000000011px;top:438px;font-size:14.8px;transform:scaleY(1.08);transform-origin:0 12px">18</div>
<div class="t" style="left:55.80000000000001px;top:438px;font-size:14.8px;width:121px;overflow:hidden;transform:scaleY(1.08);transform-origin:0 12px">18</div>
<div class="t" style="left:184.79999999999995px;top:438px;font-size:14.8px;width:47px;overflow:hidden;transform:scaleY(1.08);transform-origin:0 12px">NULL</div>
<div class="t" style="left:239.79999999999995px;top:438px;font-size:14.8px;width:78px;overflow:hidden;transform:scaleY(1.08);transform-origin:0 12px">John</div>
<div class="t" style="left:325.79999999999995px;top:438px;font-size:14.8px;width:92px;overflow:hidden;transform:scaleY(1.08);transform-origin:0 12px">L</div>
<div class="t" style="left:425.79999999999995px;top:438px;font-size:14.8px;width:83px;overflow:hidden;transform:scaleY(1.08);transform-origin:0 12px">Wood</div>
<div class="t" style="left:516.8px;top:438px;font-size:14.8px;width:47px;overflow:hidden;transform:scaleY(1.08);transform-origin:0 12px">NULL</div>
<div class="t" style="left:571.8px;top:438px;font-size:14.8px;width:254px;overflow:hidden;transform:scaleY(1.08);transform-origin:0 12px">Marketing Specialist</div>
<div class="t" style="left:833.8px;top:438px;font-size:14.8px;width:105px;overflow:hidden;transform:scaleY(1.08);transform-origin:0 12px">486-555-0150</div>
<div class="t" style="left:946.8px;top:438px;font-size:14.8px;width:137px;overflow:hidden;transform:scaleY(1.08);transform-origin:0 12px">Work</div>
<div class="t" style="left:1091.8px;top:438px;font-size:14.8px;width:227px;overflow:hidden;transform:scaleY(1.08);transform-origin:0 12px">john5@adventure-works.com</div>
<div class="t" style="left:1326.8px;top:438px;font-size:14.8px;width:116px;overflow:hidden;transform:scaleY(1.08);transform-origin:0 12px">2</div>
<div class="t" style="left:1450.8px;top:438px;font-size:14.8px;width:261px;overflow:hidden;transform:scaleY(1.08);transform-origin:0 12px">9906 Oak Grove Road</div>
</div>
<div style="position:absolute;left:392px;top:420px;width:1503px;height:1px;background:#a0a4ae;"></div>
<div style="position:absolute;left:392px;top:420px;width:1px;height:451px;background:#a0a4ae;"></div>
<div style="position:absolute;left:1879px;top:421px;width:16px;height:450px;background:#f0f0f0;"></div>
<div style="position:absolute;left:1879px;top:438px;width:15px;height:52px;background:#cdcdcd;"></div>
<svg style="left:1px;top:28px" width="4" height="23" viewBox="0 0 4 23"><rect x="2" y="0" width="1" height="1" fill="#5f6b80"/><rect x="0" y="2" width="1" height="1" fill="#5f6b80"/><rect x="2" y="4" width="1" height="1" fill="#5f6b80"/><rect x="0" y="6" width="1" height="1" fill="#5f6b80"/><rect x="2" y="8" width="1" height="1" fill="#5f6b80"/><rect x="0" y="10" width="1" height="1" fill="#5f6b80"/><rect x="2" y="12" width="1" height="1" fill="#5f6b80"/><rect x="0" y="14" width="1" height="1" fill="#5f6b80"/><rect x="2" y="16" width="1" height="1" fill="#5f6b80"/><rect x="0" y="18" width="1" height="1" fill="#5f6b80"/><rect x="2" y="20" width="1" height="1" fill="#5f6b80"/><rect x="0" y="22" width="1" height="1" fill="#5f6b80"/></svg>
<svg style="left:13px;top:33px" width="12" height="12" viewBox="0 0 12 12"><circle cx="6" cy="6" r="6" fill="#0e4f9c"/><path d="M2.5 6L5.5 3V5H9.5V7H5.5V9Z" fill="#e8ecf4"/></svg>
<svg style="left:33px;top:38px" width="6" height="3" viewBox="0 0 6 3"><path d="M0 0H6L3 3Z" fill="#1e1e1e"/></svg>
<svg style="left:47px;top:34px" width="12" height="12" viewBox="0 0 12 12"><circle cx="6" cy="6" r="6" fill="#b9bdc6"/><path d="M9.5 6L6.5 3V5H2.5V7H6.5V9Z" fill="#d8dce6"/></svg>
<div style="position:absolute;left:67px;top:27px;width:1px;height:25px;background:#8e9ab0;"></div>
<svg style="left:76px;top:31px" width="15" height="16" viewBox="0 0 15 16"><g stroke="#c86e00" stroke-width="1.2"><path d="M4.5 0.5V8.5M0.5 4.5H8.5M1.7 1.7L7.3 7.3M7.3 1.7L1.7 7.3"/></g><circle cx="4.5" cy="4.5" r="1.6" fill="#cfd6e5" stroke="#c86e00" stroke-width="1"/><path d="M8.5 2.5H12.5L14 4V10" fill="none" stroke="#333" stroke-width="1.3"/><path d="M5.5 7.5H11.5L13 9V14.5H5.5Z" fill="#d9dbe6" stroke="#333" stroke-width="1.3"/><path d="M3 9.5V12.5H4.5" fill="none" stroke="#333" stroke-width="1.2"/></svg>
<svg style="left:98px;top:38px" width="6" height="3" viewBox="0 0 6 3"><path d="M0 0H6L3 3Z" fill="#1e1e1e"/></svg>
<svg style="left:111px;top:31px" width="16" height="16" viewBox="0 0 16 16"><g stroke="#a8b4c4" stroke-width="1"><path d="M4.5 0.5V8.5M0.5 4.5H8.5M1.7 1.7L7.3 7.3M7.3 1.7L1.7 7.3"/></g><path d="M7 5.5H14.5V15H5.5V9" fill="#d6d9e3" stroke="#b0b3ba" stroke-width="1.5"/></svg>
<svg style="left:133px;top:38px" width="6" height="3" viewBox="0 0 6 3"><path d="M0 0H6L3 3Z" fill="#8a8f88"/></svg>
<svg style="left:145px;top:32px" width="16" height="16" viewBox="0 0 16 16"><path d="M7 13.5H14.5V4.5H7" fill="#d8dae4" stroke="#dfae55" stroke-width="1.3"/><path d="M1 9.5L3 8.5H11L14 14.5H2Z" fill="#e8b45e"/><path d="M2 7.5C0.5 6 1 3 4 3H7" fill="none" stroke="#0e4f9c" stroke-width="1.8"/><path d="M6.5 0.5L9.5 3L6.5 5.5Z" fill="#0e4f9c"/></svg>
<svg style="left:169px;top:34px" width="13" height="13" viewBox="0 0 13 13"><path d="M0 0H10L13 3V13H0Z" fill="#0e4f9c"/><rect x="3" y="0" width="6" height="5" fill="#d9dce8"/><rect x="6" y="1" width="2" height="2.5" fill="#0e4f9c"/></svg>
<svg style="left:190px;top:33px" width="15" height="15" viewBox="0 0 15 15"><path d="M6 0H12L14.5 2.5V8.5H6Z" fill="#0e4f9c"/><rect x="8" y="0" width="4" height="3.2" fill="#d9dce8"/><path d="M0 6H6L8.5 8.5V14.5H0Z" fill="#0e4f9c"/><rect x="2" y="6" width="4" height="3.2" fill="#d9dce8"/></svg>
<div style="position:absolute;left:211px;top:27px;width:1px;height:25px;background:#8e9ab0;"></div>
<svg style="left:219px;top:33px" width="15" height="15" viewBox="0 0 15 15"><path d="M4.5 0.5H10.5L14 4V11.5H4.5Z" fill="#d9dce8" stroke="#333" stroke-width="1.2"/><path d="M10.5 0.5V4H14" fill="#333"/><g stroke="#333" stroke-width="1"><path d="M6.5 3.5H9M6.5 5.5H12M6.5 7.5H12M6.5 9.5H12"/></g><path d="M0.5 9V13C0.5 14 5.5 14 5.5 13V9Z" fill="#333"/><ellipse cx="3" cy="9" rx="2.5" ry="1.2" fill="#333"/><ellipse cx="3" cy="9" rx="1.5" ry="0.6" fill="#ddd"/></svg>
<div class="t" style="left:238.37px;top:32px;font-size:15.5px;color:#1e1e1e;transform:scale(1.0210,1.0);transform-origin:0 13px;"><u>N</u>ew Query</div>
<svg style="left:329px;top:33px" width="15" height="15" viewBox="0 0 15 15"><path d="M4.5 0.5H10.5L14 4V11.5H4.5Z" fill="#d9dce8" stroke="#333" stroke-width="1.2"/><path d="M10.5 0.5V4H14" fill="#333"/><g stroke="#333" stroke-width="1"><path d="M6.5 3.5H9M6.5 5.5H12M6.5 7.5H12M6.5 9.5H12"/></g><path d="M0.5 9V13C0.5 14 5.5 14 5.5 13V9Z" fill="#333"/><ellipse cx="3" cy="9" rx="2.5" ry="1.2" fill="#333"/><ellipse cx="3" cy="9" rx="1.5" ry="0.6" fill="#ddd"/></svg>
<svg style="left:352px;top:32px" width="16" height="15" viewBox="0 0 16 15"><path d="M2.5 8V3.5L8 0.8L13.5 3.5V11.5" fill="#d9dce8" stroke="#333" stroke-width="1.1"/><path d="M2.5 3.5L8 6.5L13.5 3.5M8 6.5V8" fill="none" stroke="#333" stroke-width="1"/><g fill="#333" shape-rendering="crispEdges"><rect x="0" y="10" width="1" height="1"/><rect x="2" y="10" width="1" height="1"/><rect x="0" y="11" width="1" height="1"/><rect x="1" y="11" width="1" height="1"/><rect x="2" y="11" width="1" height="1"/><rect x="0" y="12" width="1" height="1"/><rect x="1" y="12" width="1" height="1"/><rect x="2" y="12" width="1" height="1"/><rect x="0" y="13" width="1" height="1"/><rect x="2" y="13" width="1" height="1"/><rect x="0" y="14" width="1" height="1"/><rect x="2" y="14" width="1" height="1"/><rect x="4" y="10" width="1" height="1"/><rect x="5" y="10" width="1" height="1"/><rect x="4" y="11" width="1" height="1"/><rect x="6" y="11" width="1" height="1"/><rect x="4" y="12" width="1" height="1"/><rect x="6" y="12" width="1" height="1"/><rect x="4" y="13" width="1" height="1"/><rect x="6" y="13" width="1" height="1"/><rect x="4" y="14" width="1" height="1"/><rect x="5" y="14" width="1" height="1"/><rect x="8" y="10" width="1" height="1"/><rect x="10" y="10" width="1" height="1"/><rect x="8" y="11" width="1" height="1"/><rect x="10" y="11" width="1" height="1"/><rect x="9" y="12" width="1" height="1"/><rect x="8" y="13" width="1" height="1"/><rect x="10" y="13" width="1" height="1"/><rect x="8" y="14" width="1" height="1"/><rect x="10" y="14" width="1" height="1"/></g></svg>
<svg style="left:373.5px;top:32px" width="16" height="15" viewBox="0 0 16 15"><path d="M2.5 8V3.5L8 0.8L13.5 3.5V11.5" fill="#d9dce8" stroke="#333" stroke-width="1.1"/><path d="M2.5 3.5L8 6.5L13.5 3.5M8 6.5V8" fill="none" stroke="#333" stroke-width="1"/><g fill="#333" shape-rendering="crispEdges"><rect x="0" y="10" width="1" height="1"/><rect x="1" y="10" width="1" height="1"/><rect x="0" y="11" width="1" height="1"/><rect x="2" y="11" width="1" height="1"/><rect x="0" y="12" width="1" height="1"/><rect x="2" y="12" width="1" height="1"/><rect x="0" y="13" width="1" height="1"/><rect x="2" y="13" width="1" height="1"/><rect x="0" y="14" width="1" height="1"/><rect x="1" y="14" width="1" height="1"/><rect x="4" y="10" width="1" height="1"/><rect x="6" y="10" width="1" height="1"/><rect x="4" y="11" width="1" height="1"/><rect x="5" y="11" width="1" height="1"/><rect x="6" y="11" width="1" height="1"/><rect x="4" y="12" width="1" height="1"/><rect x="5" y="12" width="1" height="1"/><rect x="6" y="12" width="1" height="1"/><rect x="4" y="13" width="1" height="1"/><rect x="6" y="13" width="1" height="1"/><rect x="4" y="14" width="1" height="1"/><rect x="6" y="14" width="1" height="1"/><rect x="8" y="10" width="1" height="1"/><rect x="10" y="10" width="1" height="1"/><rect x="8" y="11" width="1" height="1"/><rect x="10" y="11" width="1" height="1"/><rect x="9" y="12" width="1" height="1"/><rect x="8" y="13" width="1" height="1"/><rect x="10" y="13" width="1" height="1"/><rect x="8" y="14" width="1" height="1"/><rect x="10" y="14" width="1" height="1"/></g></svg>
<svg style="left:396px;top:32px" width="16" height="15" viewBox="0 0 16 15"><path d="M2.5 8V3.5L8 0.8L13.5 3.5V11.5" fill="#d9dce8" stroke="#333" stroke-width="1.1"/><path d="M2.5 3.5L8 6.5L13.5 3.5M8 6.5V8" fill="none" stroke="#333" stroke-width="1"/><g fill="#333" shape-rendering="crispEdges"><rect x="0" y="10" width="1" height="1"/><rect x="2" y="10" width="1" height="1"/><rect x="0" y="11" width="1" height="1"/><rect x="2" y="11" width="1" height="1"/><rect x="1" y="12" width="1" height="1"/><rect x="0" y="13" width="1" height="1"/><rect x="2" y="13" width="1" height="1"/><rect x="0" y="14" width="1" height="1"/><rect x="2" y="14" width="1" height="1"/><rect x="4" y="10" width="1" height="1"/><rect x="6" y="10" width="1" height="1"/><rect x="4" y="11" width="1" height="1"/><rect x="5" y="11" width="1" height="1"/><rect x="6" y="11" width="1" height="1"/><rect x="4" y="12" width="1" height="1"/><rect x="5" y="12" width="1" height="1"/><rect x="6" y="12" width="1" height="1"/><rect x="4" y="13" width="1" height="1"/><rect x="6" y="13" width="1" height="1"/><rect x="4" y="14" width="1" height="1"/><rect x="6" y="14" width="1" height="1"/><rect x="8" y="10" width="1" height="1"/><rect x="8" y="11" width="1" height="1"/><rect x="8" y="12" width="1" height="1"/><rect x="8" y="13" width="1" height="1"/><rect x="8" y="14" width="1" height="1"/><rect x="9" y="14" width="1" height="1"/><rect x="10" y="14" width="1" height="1"/><rect x="13" y="10" width="1" height="1"/><rect x="12" y="11" width="1" height="1"/><rect x="14" y="11" width="1" height="1"/><rect x="12" y="12" width="1" height="1"/><rect x="13" y="12" width="1" height="1"/><rect x="14" y="12" width="1" height="1"/><rect x="12" y="13" width="1" height="1"/><rect x="14" y="13" width="1" height="1"/><rect x="12" y="14" width="1" height="1"/><rect x="14" y="14" width="1" height="1"/></g></svg>
<svg style="left:417.5px;top:32px" width="16" height="15" viewBox="0 0 16 15"><path d="M2.5 8V3.5L8 0.8L13.5 3.5V11.5" fill="#d9dce8" stroke="#333" stroke-width="1.1"/><path d="M2.5 3.5L8 6.5L13.5 3.5M8 6.5V8" fill="none" stroke="#333" stroke-width="1"/><g fill="#333" shape-rendering="crispEdges"><rect x="0" y="10" width="1" height="1"/><rect x="1" y="10" width="1" height="1"/><rect x="0" y="11" width="1" height="1"/><rect x="2" y="11" width="1" height="1"/><rect x="0" y="12" width="1" height="1"/><rect x="2" y="12" width="1" height="1"/><rect x="0" y="13" width="1" height="1"/><rect x="2" y="13" width="1" height="1"/><rect x="0" y="14" width="1" height="1"/><rect x="1" y="14" width="1" height="1"/><rect x="5" y="10" width="1" height="1"/><rect x="4" y="11" width="1" height="1"/><rect x="6" y="11" width="1" height="1"/><rect x="4" y="12" width="1" height="1"/><rect x="5" y="12" width="1" height="1"/><rect x="6" y="12" width="1" height="1"/><rect x="4" y="13" width="1" height="1"/><rect x="6" y="13" width="1" height="1"/><rect x="4" y="14" width="1" height="1"/><rect x="6" y="14" width="1" height="1"/><rect x="8" y="10" width="1" height="1"/><rect x="10" y="10" width="1" height="1"/><rect x="8" y="11" width="1" height="1"/><rect x="10" y="11" width="1" height="1"/><rect x="9" y="12" width="1" height="1"/><rect x="8" y="13" width="1" height="1"/><rect x="10" y="13" width="1" height="1"/><rect x="8" y="14" width="1" height="1"/><rect x="10" y="14" width="1" height="1"/></g></svg>
<div style="position:absolute;left:439px;top:27px;width:1px;height:25px;background:#8e9ab0;"></div>
<svg style="left:448px;top:32px" width="14" height="16" viewBox="0 0 14 16"><path d="M3 1L7 9M11 1L7 9" stroke="#333" stroke-width="1.4"/><circle cx="3.5" cy="12" r="2.6" fill="none" stroke="#333" stroke-width="1.3"/><circle cx="10.5" cy="12" r="2.6" fill="none" stroke="#333" stroke-width="1.3"/><path d="M7 9V11" stroke="#333"/></svg>
<svg style="left:470px;top:32px" width="14" height="15" viewBox="0 0 14 15"><path d="M4.5 3V0.9H12.6V9.1H9.5" fill="#d9dce8" stroke="#333" stroke-width="1.3"/><rect x="1.2" y="4.2" width="7" height="9.6" fill="#d0d3de" stroke="#333" stroke-width="1.3"/></svg>
<svg style="left:491px;top:32px" width="14" height="15" viewBox="0 0 14 15"><path d="M3.7 7V3.7H12.9V13.9H7.5" fill="#d9dce8" stroke="#333" stroke-width="1.3"/><path d="M6 3.5C6 0.5 10.5 0.5 10.5 3.5" fill="none" stroke="#333" stroke-width="1.3"/><rect x="0.9" y="7.9" width="5.6" height="6" fill="#d0d3de" stroke="#333" stroke-width="1.3"/></svg>
<div style="position:absolute;left:513px;top:27px;width:1px;height:25px;background:#8e9ab0;"></div>
<svg style="left:522px;top:32px" width="14" height="16" viewBox="0 0 14 16"><path d="M3 5.5C5 2 11.5 2 11.5 6.5C11.5 9.5 7 12 3.5 14.5" fill="none" stroke="#0e4f9c" stroke-width="2.2"/><path d="M0.5 1L1 7.5L6.5 5.5Z" fill="#0e4f9c"/></svg>
<svg style="left:544px;top:38px" width="6" height="3" viewBox="0 0 6 3"><path d="M0 0H6L3 3Z" fill="#1e1e1e"/></svg>
<svg style="left:557px;top:32px" width="14" height="16" viewBox="0 0 14 16"><path d="M11 5.5C9 2 2.5 2 2.5 6.5C2.5 9.5 7 12 10.5 14.5" fill="none" stroke="#b8bcc4" stroke-width="1.8"/><path d="M13.5 1L13 7.5L7.5 5.5Z" fill="#b8bcc4"/></svg>
<svg style="left:579.5px;top:38px" width="6" height="3" viewBox="0 0 6 3"><path d="M0 0H6L3 3Z" fill="#8a8f88"/></svg>
<div style="position:absolute;left:591px;top:27px;width:1px;height:25px;background:#8e9ab0;"></div>
<svg style="left:599px;top:33px" width="15" height="14" viewBox="0 0 15 14"><rect x="0.8" y="0.8" width="13.2" height="12" fill="#d9dce8" stroke="#333" stroke-width="1.4"/><path d="M1 6L4.5 2.8L8 6L13.5 1" fill="none" stroke="#333" stroke-width="1.1"/><circle cx="3.8" cy="10" r="3.2" fill="#d9dce8" stroke="#333" stroke-width="1.3"/><path d="M3 11L5 9" stroke="#333"/></svg>
<div style="position:absolute;left:621px;top:27px;width:1px;height:25px;background:#8e9ab0;"></div>
<svg style="left:640px;top:38px" width="6" height="3" viewBox="0 0 6 3"><path d="M0 0H6L3 3Z" fill="#8a8f88"/></svg>
<div style="position:absolute;left:652px;top:27px;width:1px;height:25px;background:#8e9ab0;"></div>
<svg style="left:660px;top:32px" width="16" height="16" viewBox="0 0 16 16"><rect x="7" y="1" width="8" height="10" fill="#e5b15c"/><rect x="8" y="2" width="6" height="1" fill="#f3dcae"/><rect x="3" y="3" width="6" height="8" fill="#e8b45e"/><g fill="#d98a3a"><rect x="4" y="5" width="1" height="1"/><rect x="6" y="7" width="1" height="1"/><rect x="10" y="5" width="1" height="1"/><rect x="12" y="8" width="1" height="1"/></g><circle cx="5.5" cy="11" r="2.4" fill="#d9dce8" stroke="#0e4f9c" stroke-width="1.5"/><path d="M3.8 12.8L1 15.5" stroke="#0e4f9c" stroke-width="2"/></svg>
<div style="position:absolute;left:682px;top:27px;width:184px;height:25px;background:#ffffff;border:1px solid #cccedb"></div>
<div class="t" style="left:684.61px;top:32.5px;font-size:15.5px;color:#1e1e1e;transform:scale(0.9920,1.0);transform-origin:0 13px;">F24</div>
<svg style="left:858px;top:39px" width="6" height="3" viewBox="0 0 6 3"><path d="M0 0H6L3 3Z" fill="#1e1e1e"/></svg>
<div style="position:absolute;left:873px;top:27px;width:1px;height:25px;background:#8e9ab0;"></div>
<svg style="left:881px;top:33px" width="16" height="14" viewBox="0 0 16 14"><path d="M1.6 5V1.5H14.4V11.4H9" fill="#d9dce8" stroke="#333" stroke-width="1.2"/><rect x="1" y="0" width="14" height="3" fill="#333"/><path d="M0.7 7.8L4 10L0.7 12.2Z" fill="none" stroke="#68217a" stroke-width="1.4"/><path d="M4 10L7.5 6.3V13.7Z" fill="#68217a"/><path d="M6 7.5V12.5" stroke="#68217a" stroke-width="2"/></svg>
<svg style="left:903px;top:32px" width="16" height="16" viewBox="0 0 16 16"><path d="M2.2 14L8.2 8" stroke="#333" stroke-width="3.2" stroke-linecap="round"/><circle cx="10.8" cy="5.2" r="4.6" fill="#333"/><path d="M10.6 5.4L15.5 0.5" stroke="#cfd6e5" stroke-width="2.6"/><circle cx="10.6" cy="5.4" r="1.3" fill="#cfd6e5"/></svg>
<svg style="left:927px;top:34px" width="14" height="12" viewBox="0 0 14 12"><rect x="0" y="3" width="14" height="8" fill="#333"/><rect x="0" y="6" width="14" height="1.2" fill="#cfd6e5"/><rect x="3" y="5.3" width="1.5" height="2.6" fill="#333"/><rect x="9.5" y="5.3" width="1.5" height="2.6" fill="#333"/><path d="M4.5 3V0.8H9.5V3" fill="none" stroke="#333" stroke-width="1.2"/></svg>
<svg style="left:949px;top:34px" width="15" height="11" viewBox="0 0 15 11"><rect x="0.6" y="0.6" width="13.8" height="9.8" fill="#d9dce8" stroke="#333" stroke-width="1.2"/><path d="M2.5 2.5L5.2 5L2.5 7.5" fill="none" stroke="#333" stroke-width="1.3"/></svg>
<svg style="left:970px;top:38px" width="6" height="3" viewBox="0 0 6 3"><path d="M0 0H6L3 3Z" fill="#1e1e1e"/></svg>
<div style="position:absolute;left:980px;top:24px;width:11px;height:31px;background:#dfe3ee;"></div>
<svg style="left:983px;top:44px" width="6" height="7" viewBox="0 0 6 7"><rect x="0" y="0" width="6" height="1" fill="#1e1e1e"/><path d="M0 3H6L3 6Z" fill="#1e1e1e"/></svg>
<svg style="left:1px;top:58px" width="4" height="22" viewBox="0 0 4 22"><rect x="2" y="0" width="1" height="1" fill="#5f6b80"/><rect x="0" y="2" width="1" height="1" fill="#5f6b80"/><rect x="2" y="4" width="1" height="1" fill="#5f6b80"/><rect x="0" y="6" width="1" height="1" fill="#5f6b80"/><rect x="2" y="8" width="1" height="1" fill="#5f6b80"/><rect x="0" y="10" width="1" height="1" fill="#5f6b80"/><rect x="2" y="12" width="1" height="1" fill="#5f6b80"/><rect x="0" y="14" width="1" height="1" fill="#5f6b80"/><rect x="2" y="16" width="1" height="1" fill="#5f6b80"/><rect x="0" y="18" width="1" height="1" fill="#5f6b80"/><rect x="2" y="20" width="1" height="1" fill="#5f6b80"/></svg>
<svg style="left:13px;top:62px" width="10" height="15" viewBox="0 0 10 15"><rect x="2" y="0" width="2" height="3" fill="#b0b3ba"/><rect x="6" y="0" width="2" height="3" fill="#b0b3ba"/><path d="M0 3H10V5L8 8H2L0 5Z" fill="#b0b3ba"/><rect x="4" y="8" width="2" height="7" fill="#b0b3ba"/></svg>
<svg style="left:32px;top:62px" width="16" height="15" viewBox="0 0 16 15"><path d="M0.8 0.8L6 6" stroke="#0e4f9c" stroke-width="2.6"/><path d="M6 6L7.5 7.5" stroke="#0e4f9c" stroke-width="1.5"/><rect x="9" y="0" width="2" height="3" fill="#222"/><rect x="13" y="0" width="2" height="3" fill="#222"/><path d="M7.5 3H16V5L14.5 8H9L7.5 5Z" fill="#222"/><rect x="11" y="8" width="2" height="7" fill="#222"/></svg>
<div style="position:absolute;left:54px;top:58px;width:1px;height:21px;background:#8e9ab0;"></div>
<div style="position:absolute;left:62px;top:58px;width:160px;height:21px;background:#ffffff;border:1px solid #cccedb"></div>
<div class="t" style="left:65.40px;top:62px;font-size:15.5px;color:#1e1e1e;transform:scale(1.0086,1.0);transform-origin:0 13px;">AdventureWorks201</div>
<svg style="left:212px;top:69px" width="6" height="3" viewBox="0 0 6 3"><path d="M0 0H6L3 3Z" fill="#1e1e1e"/></svg>
<div style="position:absolute;left:228px;top:58px;width:1px;height:21px;background:#8e9ab0;"></div>
<svg style="left:239px;top:63px" width="10" height="13" viewBox="0 0 10 13"><path d="M1 1V12L9 6.5Z" fill="none" stroke="#388a34" stroke-width="2"/></svg>
<div class="t" style="left:255.38px;top:62px;font-size:15.5px;color:#1e1e1e;transform:scale(0.9407,1.0);transform-origin:0 13px;">E<u>x</u>ecute</div>
<svg style="left:323px;top:65px" width="8" height="8" viewBox="0 0 8 8"><rect width="8" height="8" fill="#b4b8c0"/></svg>
<svg style="left:342px;top:63px" width="14" height="13" viewBox="0 0 14 13"><path d="M1 6.5L5 11.5L13 1" fill="none" stroke="#222" stroke-width="2.6"/></svg>
<svg style="left:364px;top:62px" width="15" height="15" viewBox="0 0 15 15"><g fill="#d9dce8" stroke="#333" stroke-width="1.2"><rect x="0.6" y="0.6" width="4" height="4"/><rect x="9.6" y="0.6" width="4" height="4"/><rect x="0.6" y="9.6" width="4" height="4"/></g><path d="M4.6 2.6H9.6M2.6 4.6V9.6" stroke="#333" stroke-width="1.2"/><path d="M8.5 10H13.5L11 13Z" fill="none" stroke="#555" stroke-width="1"/></svg>
<svg style="left:385px;top:62px" width="15" height="15" viewBox="0 0 15 15"><rect x="3" y="0.7" width="11" height="9" fill="#d9dce8" stroke="#333" stroke-width="1.3"/><rect x="3" y="0" width="11" height="2" fill="#333"/><rect x="0.8" y="3.8" width="11" height="10" fill="#d9dce8" stroke="#333" stroke-width="1.3"/><rect x="1" y="3" width="11" height="2" fill="#333"/><rect x="3.5" y="8" width="6" height="1.3" fill="#333"/></svg>
<div style="position:absolute;left:404px;top:56px;width:22px;height:25px;background:#fffdf6;border:1px solid #4a5f86"></div>
<svg style="left:410px;top:62px" width="11" height="14" viewBox="0 0 11 14"><rect x="0.7" y="0.7" width="9.6" height="12.6" fill="#d9dce8" stroke="#333" stroke-width="1.3"/><rect x="1.3" y="8" width="8.5" height="5" fill="#fff"/><path d="M1 7.8H10" stroke="#333"/><rect x="2.5" y="9" width="1" height="1" fill="#333"/><rect x="4.5" y="9" width="4" height="1" fill="#333"/><rect x="2.5" y="11" width="1" height="1" fill="#333"/><rect x="4.5" y="11" width="4" height="1" fill="#333"/></svg>
<div style="position:absolute;left:429px;top:58px;width:1px;height:21px;background:#8e9ab0;"></div>
<svg style="left:438px;top:62px" width="15" height="15" viewBox="0 0 15 15"><g fill="#d9dce8" stroke="#333" stroke-width="1.2"><rect x="0.6" y="0.6" width="4" height="4"/><rect x="9.6" y="0.6" width="4" height="4"/><rect x="0.6" y="9.6" width="4" height="4"/></g><path d="M4.6 2.6H9.6M2.6 4.6V9.6" stroke="#333" stroke-width="1.2"/></svg>
<svg style="left:460px;top:62px" width="15" height="15" viewBox="0 0 15 15"><g fill="#d9dce8" stroke="#333" stroke-width="1.2"><rect x="0.6" y="0.6" width="4" height="4"/><rect x="9.6" y="0.6" width="4" height="4"/><rect x="0.6" y="9.6" width="4" height="4"/></g><path d="M4.6 2.6H9.6M2.6 4.6V9.6" stroke="#333" stroke-width="1.2"/><circle cx="11" cy="11" r="3.5" fill="#2a8a2a"/><path d="M9.2 11L10.6 12.4L13 9.8" fill="none" stroke="#fff" stroke-width="1.2"/></svg>
<svg style="left:482px;top:62px" width="15" height="15" viewBox="0 0 15 15"><path d="M6.5 3V0.5H13.5V8.5H11" fill="none" stroke="#333" stroke-width="1.2"/><path d="M9.5 7V4M11.5 7V2.5" stroke="#333"/><rect x="0" y="4" width="8" height="11" fill="#333"/><rect x="1.3" y="5.5" width="5.5" height="1" fill="#cfd6e5"/><rect x="1.3" y="7.5" width="5.5" height="1" fill="#cfd6e5"/><rect x="5.5" y="12.5" width="1.2" height="1.2" fill="#cfd6e5"/></svg>
<div style="position:absolute;left:503px;top:58px;width:1px;height:21px;background:#8e9ab0;"></div>
<svg style="left:511px;top:62px" width="15" height="15" viewBox="0 0 15 15"><path d="M4.5 7V0.5H13.5V13.5H8" fill="#d9dce8" stroke="#333" stroke-width="1.2"/><path d="M7 3.5H11.5M8 6.5H11.5M8 9.5H11.5" stroke="#333" stroke-width="1"/><rect x="0" y="8" width="8" height="7" fill="#333"/><g fill="#d9dce8" shape-rendering="crispEdges"><rect x="0.5" y="9" width="1" height="1"/><rect x="1.5" y="9" width="1" height="1"/><rect x="2.5" y="9" width="1" height="1"/><rect x="0.5" y="10" width="1" height="1"/><rect x="2.5" y="10" width="1" height="1"/><rect x="0.5" y="11" width="1" height="1"/><rect x="2.5" y="11" width="1" height="1"/><rect x="0.5" y="12" width="1" height="1"/><rect x="2.5" y="12" width="1" height="1"/><rect x="0.5" y="13" width="1" height="1"/><rect x="1.5" y="13" width="1" height="1"/><rect x="2.5" y="13" width="1" height="1"/><rect x="5.5" y="9" width="1" height="1"/><rect x="4.5" y="10" width="1" height="1"/><rect x="5.5" y="10" width="1" height="1"/><rect x="5.5" y="11" width="1" height="1"/><rect x="5.5" y="12" width="1" height="1"/><rect x="5.5" y="13" width="1" height="1"/></g></svg>
<div style="position:absolute;left:530px;top:56px;width:22px;height:25px;background:#fffdf6;border:1px solid #4a5f86"></div>
<svg style="left:534px;top:62px" width="15" height="15" viewBox="0 0 15 15"><rect x="2.5" y="0.5" width="12" height="13" fill="#333"/><g fill="#fff"><rect x="3.5" y="4" width="3" height="2"/><rect x="7.5" y="4" width="3" height="2"/><rect x="11.5" y="4" width="2" height="2"/><rect x="11.5" y="7" width="2" height="2"/><rect x="11.5" y="10" width="2" height="2"/><rect x="7.5" y="7" width="3" height="2"/></g><rect x="0" y="8" width="8" height="7" fill="#333"/><g fill="#d9dce8" shape-rendering="crispEdges"><rect x="0.5" y="9" width="1" height="1"/><rect x="1.5" y="9" width="1" height="1"/><rect x="2.5" y="9" width="1" height="1"/><rect x="0.5" y="10" width="1" height="1"/><rect x="2.5" y="10" width="1" height="1"/><rect x="0.5" y="11" width="1" height="1"/><rect x="2.5" y="11" width="1" height="1"/><rect x="0.5" y="12" width="1" height="1"/><rect x="2.5" y="12" width="1" height="1"/><rect x="0.5" y="13" width="1" height="1"/><rect x="1.5" y="13" width="1" height="1"/><rect x="2.5" y="13" width="1" height="1"/><rect x="5.5" y="9" width="1" height="1"/><rect x="4.5" y="10" width="1" height="1"/><rect x="5.5" y="10" width="1" height="1"/><rect x="5.5" y="11" width="1" height="1"/><rect x="5.5" y="12" width="1" height="1"/><rect x="5.5" y="13" width="1" height="1"/></g></svg>
<svg style="left:556px;top:62px" width="15" height="15" viewBox="0 0 15 15"><path d="M4.5 7V0.5H10.5L13.5 3.5V13.5H8" fill="#d9dce8" stroke="#333" stroke-width="1.2"/><path d="M10 0.5V4H13.5Z" fill="#333"/><rect x="0" y="8" width="8" height="7" fill="#333"/><g fill="#d9dce8" shape-rendering="crispEdges"><rect x="0.5" y="9" width="1" height="1"/><rect x="1.5" y="9" width="1" height="1"/><rect x="2.5" y="9" width="1" height="1"/><rect x="0.5" y="10" width="1" height="1"/><rect x="2.5" y="10" width="1" height="1"/><rect x="0.5" y="11" width="1" height="1"/><rect x="2.5" y="11" width="1" height="1"/><rect x="0.5" y="12" width="1" height="1"/><rect x="2.5" y="12" width="1" height="1"/><rect x="0.5" y="13" width="1" height="1"/><rect x="1.5" y="13" width="1" height="1"/><rect x="2.5" y="13" width="1" height="1"/><rect x="5.5" y="9" width="1" height="1"/><rect x="4.5" y="10" width="1" height="1"/><rect x="5.5" y="10" width="1" height="1"/><rect x="5.5" y="11" width="1" height="1"/><rect x="5.5" y="12" width="1" height="1"/><rect x="5.5" y="13" width="1" height="1"/></g></svg>
<div style="position:absolute;left:577px;top:58px;width:1px;height:21px;background:#8e9ab0;"></div>
<svg style="left:587px;top:63px" width="11" height="11" viewBox="0 0 11 11"><rect x="0" y="0" width="1.5" height="1.2" fill="#333"/><rect x="2.5" y="0" width="8" height="1.2" fill="#333"/><rect x="3.5" y="2.5" width="7" height="1.2" fill="#3a9a3a"/><rect x="3.5" y="4.5" width="7" height="1.2" fill="#3a9a3a"/><rect x="3.5" y="6.8" width="7" height="1.2" fill="#333"/><rect x="2" y="9" width="8.5" height="1.2" fill="#333"/><rect x="2" y="7" width="1.2" height="3" fill="#333"/></svg>
<svg style="left:608px;top:62px" width="14" height="13" viewBox="0 0 14 13"><path d="M1.5 4C2 1 6.5 0.5 6.5 3.5C6.5 5.5 4 6.5 3 7.5" fill="none" stroke="#0e4f9c" stroke-width="1.7"/><path d="M0 0.5L0.5 5L4 2.5Z" fill="#0e4f9c"/><g fill="#333"><rect x="7" y="3" width="6" height="1.2"/><rect x="7" y="5" width="6" height="1.2"/><rect x="7" y="7" width="6" height="1.2"/><rect x="7" y="9" width="6" height="1.2"/><rect x="4" y="11" width="9" height="1.2"/></g></svg>
<div style="position:absolute;left:629px;top:58px;width:1px;height:21px;background:#8e9ab0;"></div>
<svg style="left:638px;top:63px" width="15" height="12" viewBox="0 0 15 12"><g fill="#333"><rect x="6" y="0" width="8" height="1"/><rect x="2" y="3" width="4" height="2"/><rect x="0" y="7" width="6" height="2"/><rect x="6" y="11" width="8" height="1"/></g><path d="M14.5 5.5H9M11.5 2.5L8.5 5.5L11.5 8.5" fill="none" stroke="#0e4f9c" stroke-width="2"/></svg>
<svg style="left:660px;top:63px" width="15" height="12" viewBox="0 0 15 12"><g fill="#333"><rect x="0" y="0" width="8" height="1"/><rect x="9" y="3" width="4" height="2"/><rect x="9" y="7" width="6" height="2"/><rect x="0" y="11" width="8" height="1"/></g><path d="M0 5.5H6M3.5 2.5L6.5 5.5L3.5 8.5" fill="none" stroke="#0e4f9c" stroke-width="2"/></svg>
<div style="position:absolute;left:681px;top:58px;width:1px;height:21px;background:#8e9ab0;"></div>
<svg style="left:689px;top:62px" width="16" height="14" viewBox="0 0 16 14"><path d="M0 3.5H6M3.5 0.5L6.5 3.5L3.5 6.5" fill="none" stroke="#0e4f9c" stroke-width="2"/><text x="4.5" y="12" font-family="Liberation Sans" font-size="12" fill="#333">@</text></svg>
<div style="position:absolute;left:709px;top:56px;width:11px;height:25px;background:#dfe3ee;"></div>
<svg style="left:712px;top:72px" width="6" height="7" viewBox="0 0 6 7"><rect x="0" y="0" width="6" height="1" fill="#1e1e1e"/><path d="M0 3H6L3 6Z" fill="#1e1e1e"/></svg>
<svg style="left:318px;top:102px" width="8" height="4" viewBox="0 0 8 4"><path d="M0 0H8L4 4Z" fill="#e0e4ee"/></svg>
<svg style="left:340px;top:98px" width="8" height="12" viewBox="0 0 8 12"><path d="M1.7 0.7H6.3V6H1.7Z" fill="none" stroke="#e6e9f0" stroke-width="1.3"/><rect x="0" y="5.7" width="8" height="1.4" fill="#e6e9f0"/><rect x="3.4" y="6" width="1.2" height="5" fill="#e6e9f0"/></svg>
<svg style="left:360px;top:100px" width="10" height="9" viewBox="0 0 10 9"><path d="M0.5 0.5L9.5 8.5M9.5 0.5L0.5 8.5" stroke="#e6e9f0" stroke-width="1.4"/></svg>
<svg style="left:61px;top:131px" width="6" height="3" viewBox="0 0 6 3"><path d="M0 0H6L3 3Z" fill="#1e1e1e"/></svg>
<svg style="left:79px;top:125px" width="9" height="15" viewBox="0 0 9 15"><rect x="1.5" y="0" width="2" height="3" rx="0.8" fill="#333"/><rect x="5.5" y="0" width="2" height="3" rx="0.8" fill="#333"/><path d="M0 4H9V6L7.5 9H1.5L0 6Z" fill="#333"/><rect x="3.5" y="9" width="2" height="6" fill="#333"/></svg>
<svg style="left:98px;top:125px" width="7" height="7" viewBox="0 0 7 7"><path d="M0.5 0.5L6 6M6 0.5L0.5 6" stroke="#c8461c" stroke-width="1.3"/></svg>
<svg style="left:104px;top:125px" width="9" height="15" viewBox="0 0 9 15"><rect x="1.5" y="0" width="2" height="3" rx="0.8" fill="#333"/><rect x="5.5" y="0" width="2" height="3" rx="0.8" fill="#333"/><path d="M0 4H9V6L7.5 9H1.5L0 6Z" fill="#333"/><rect x="3.5" y="9" width="2" height="6" fill="#333"/></svg>
<svg style="left:123px;top:128px" width="8" height="8" viewBox="0 0 8 8"><rect width="8" height="8" fill="#b4b8c0"/></svg>
<svg style="left:143px;top:127px" width="12" height="12" viewBox="0 0 12 12"><path d="M0 0H12L7.3 5V12H4.7V5Z" fill="#b4b8c0"/></svg>
<svg style="left:165px;top:125px" width="12" height="15" viewBox="0 0 12 15"><path d="M9.5 5.2A4.8 4.8 0 1 1 5.5 3.2" fill="none" stroke="#0e4f9c" stroke-width="2.2"/><path d="M4.5 0L9.5 3.2L4.8 6.5Z" fill="#0e4f9c"/></svg>
<svg style="left:186px;top:126px" width="14" height="11" viewBox="0 0 14 11"><path d="M0 6H3.5L5 4L6.5 9.5L8 0.5L9.5 9L11 5L12 6H14" fill="none" stroke="#333" stroke-width="1.2"/></svg>
<svg style="left:366px;top:155px" width="8" height="5" viewBox="0 0 8 5"><path d="M0.5 4.5L4 1L7.5 4.5" fill="none" stroke="#606060" stroke-width="1.4"/></svg>
<svg style="left:614px;top:99px" width="9" height="7" viewBox="0 0 9 7"><path d="M0 3.5H3" stroke="#6d6a3e" stroke-width="1.2"/><rect x="3.3" y="0.8" width="4.5" height="4.2" fill="none" stroke="#6d6a3e" stroke-width="1.3"/><rect x="3" y="0" width="1.3" height="7" fill="#6d6a3e"/></svg>
<svg style="left:636px;top:99px" width="10" height="9" viewBox="0 0 10 9"><path d="M0.5 0.5L9.5 8.5M9.5 0.5L0.5 8.5" stroke="#6d6a3e" stroke-width="1.4"/></svg>
<svg style="left:1890px;top:104px" width="9" height="4" viewBox="0 0 9 4"><path d="M0 0H9L4.5 4Z" fill="#d6dbe9"/></svg>
<svg style="left:1881px;top:116px" width="14" height="17" viewBox="0 0 14 17"><rect x="0.5" y="0.5" width="14" height="16" fill="#eef3fa" stroke="#8d9bb0"/><path d="M3.5 7.5H14M3.5 9.8H14" stroke="#1e2a3a" stroke-width="1.3"/><path d="M10 2.5V6.5M10 11V14.5" stroke="#1e2a3a" stroke-width="1.3"/><path d="M8 4L10 1.5L12 4ZM8 13L10 15.5L12 13Z" fill="#1e2a3a" stroke="#1e2a3a" stroke-width="0.8"/></svg>
<svg style="left:1886px;top:138px" width="9" height="5" viewBox="0 0 9 5"><path d="M0 5L4.5 0L9 5Z" fill="#868999"/></svg>
<svg style="left:1886px;top:365px" width="9" height="5" viewBox="0 0 9 5"><path d="M0 0H9L4.5 5Z" fill="#868999"/></svg>
<div style="position:absolute;left:1893px;top:150px;width:2px;height:208px;background:repeating-linear-gradient(#f25a5a 0 4px, transparent 4px 8px)"></div>
<svg style="left:1883px;top:427px" width="9" height="5" viewBox="0 0 9 5"><path d="M0.7 4.5L4.5 0.8L8.3 4.5" fill="none" stroke="#606060" stroke-width="1.4"/></svg>
<div style="position:absolute;left:94px;top:868px;width:171px;height:3px;background:#dadada;"></div>
</body></html>
